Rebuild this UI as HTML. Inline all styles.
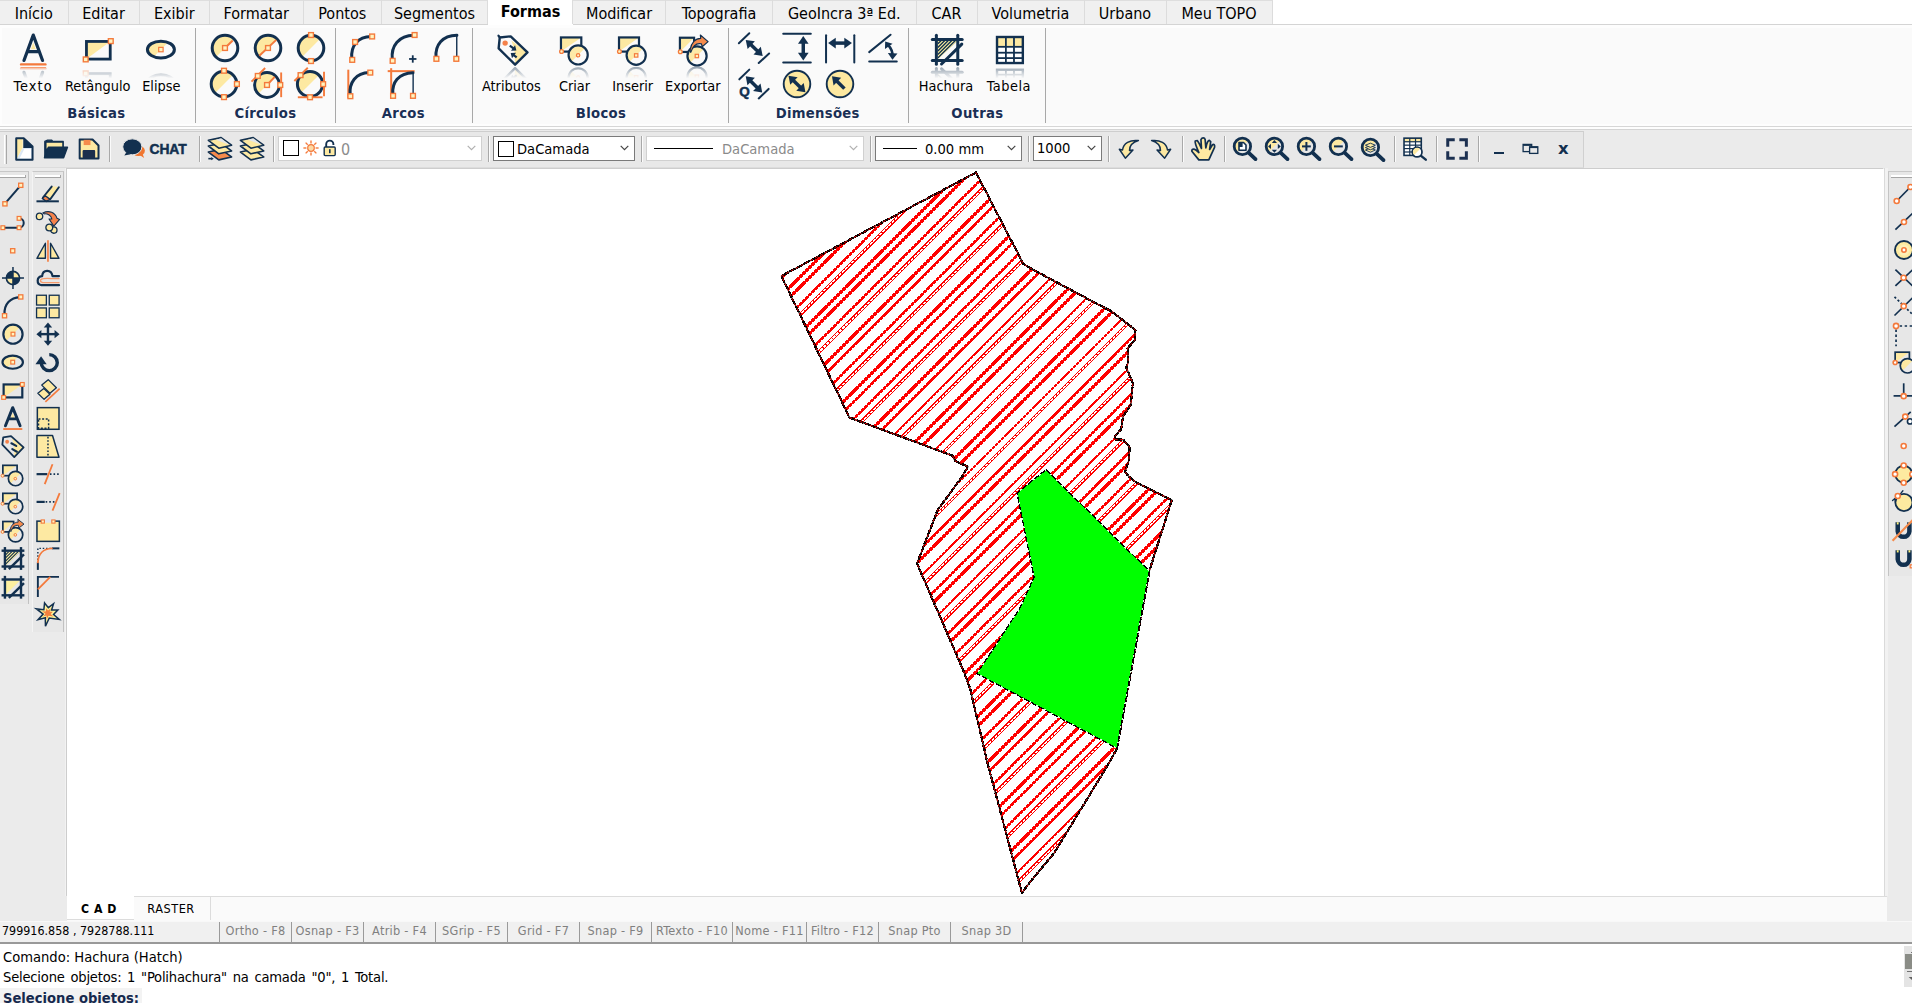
<!DOCTYPE html>
<html lang="pt-BR"><head><meta charset="utf-8"><title>CAD</title>
<style>
*{box-sizing:border-box;margin:0;padding:0}
html,body{width:1912px;height:1003px;overflow:hidden;background:#f0f0f0}
body{font-family:"DejaVu Sans Condensed","Liberation Sans",sans-serif;color:#000}
#app{position:relative;width:1912px;height:1003px;overflow:hidden;background:#ebebeb}
.abs{position:absolute}
svg{display:block;overflow:visible}
/* tabs */
#tabbar{position:absolute;left:0;top:0;width:1912px;height:25px;background:#fff;border-bottom:1px solid #d4d4d4}
.tab{box-shadow:-1px 0 0 #dcdcdc;position:absolute;top:0;height:24px;background:#f0f0f0;border-right:1px solid #dcdcdc;border-top:1px solid #dedede;font-size:16px;line-height:25px;text-align:center;white-space:nowrap}
.tab.act{box-shadow:none;top:0;height:25px;background:#fff;font-weight:bold;border:none;line-height:24px;font-size:16px}
/* ribbon */
#ribbon{position:absolute;left:0;top:25px;width:1912px;height:101px;background:#fdfdfd}
#ribpanel{position:absolute;left:2px;top:3px;width:1910px;height:96px;background:#fafafa}
.rsep{position:absolute;top:3px;width:1px;height:95px;background:#a8a8a8}
.rlab{position:absolute;font-size:14.4px;line-height:18px;white-space:nowrap;transform:translateX(-50%);top:52px}
.glab{position:absolute;font-weight:bold;letter-spacing:.3px;font-size:14.7px;text-shadow:0 0 2px #fff;line-height:18px;color:#1a2f55;white-space:nowrap;transform:translateX(-50%);top:79px}
.ico{position:absolute}
/* toolbar */
#tbband{position:absolute;left:0;top:126px;width:1912px;height:4px;background:#fdfdfd;border-top:1px solid #d6d6d6;border-bottom:1px solid #d4d4d4}
#toolbar{position:absolute;left:0;top:130px;width:1912px;height:39px;background:#ebebeb}
#tbbox{position:absolute;left:0;top:1px;width:1584px;height:37px;background:#e8e8e8;border-top:1px solid #cecece;border-right:1px solid #d0d0d0;border-bottom:1px solid #dcdcdc}
.tsep{position:absolute;top:6px;width:2px;height:26px;border-left:1px solid #a9a9a9;border-right:1px solid #fbfbfb}
.combo{position:absolute;top:5.5px;height:25px;background:#fff;border:1px solid #7a7a7a;font-size:14.6px;line-height:22px;white-space:nowrap}
.combo.dis{border-color:#d0d0d0;color:#8a8a8a}
.combo .chev{position:absolute;right:5px;top:8px}
/* canvas */
#canvas{box-shadow:-1px -1px 0 #cdcdcd;position:absolute;left:67px;top:169px;width:1817px;height:727px;background:#fff;overflow:hidden}
/* left */
.ltb{position:absolute;background:#e7e7e7;border-right:1px solid #c2c2c2;border-top:1px solid #c8c8c8;border-left:1px solid #f4f4f4}
.grip{position:absolute;height:3px;background:#fff;border-bottom:1px solid #a6a6a6;border-right:1px solid #a6a6a6}
/* bottom */
#btabs{position:absolute;left:67px;top:896px;width:1820px;height:25px;background:#fafafa;border-top:1px solid #dcdcdc}
.btab{position:absolute;top:0;height:24px;font-size:13px;line-height:23px;text-align:center}
#status{position:absolute;left:0;top:921px;width:1912px;height:23px;background:#f0f0f0;border-top:1px solid #f8f8f8;border-bottom:2px solid #999;font-size:12.6px;line-height:18px;color:#808080;font-family:"DejaVu Sans Condensed","Liberation Sans",sans-serif}
.cell{position:absolute;top:0;height:21px;letter-spacing:.28px;border-right:1px solid #9a9a9a;text-align:center;white-space:nowrap}
#cmd{position:absolute;left:0;top:944px;width:1912px;height:59px;background:#fff;font-size:14.6px;line-height:20px;white-space:nowrap}
#cmd div{position:absolute;left:3px}

</style></head><body>
<div id="app">
<div id="tabbar">
<div class="tab" style="left:0px;width:68.5px">Início</div>
<div class="tab" style="left:68.5px;width:71px">Editar</div>
<div class="tab" style="left:139.5px;width:70.5px">Exibir</div>
<div class="tab" style="left:210px;width:93.5px">Formatar</div>
<div class="tab" style="left:303.5px;width:78.5px">Pontos</div>
<div class="tab" style="left:382px;width:106px">Segmentos</div>
<div class="tab act" style="left:488px;width:85px">Formas</div>
<div class="tab" style="left:573px;width:93px">Modificar</div>
<div class="tab" style="left:666px;width:107px">Topografia</div>
<div class="tab" style="left:773px;width:143.5px">GeoIncra 3ª Ed.</div>
<div class="tab" style="left:916.5px;width:61px">CAR</div>
<div class="tab" style="left:977.5px;width:107px">Volumetria</div>
<div class="tab" style="left:1084.5px;width:82px">Urbano</div>
<div class="tab" style="left:1166.5px;width:106px">Meu TOPO</div>
</div>
<div id="ribbon"><div id="ribpanel"></div>
<div class="rsep" style="left:195px"></div>
<div class="rsep" style="left:335px"></div>
<div class="rsep" style="left:472px"></div>
<div class="rsep" style="left:728px"></div>
<div class="rsep" style="left:908px"></div>
<div class="rsep" style="left:1045px"></div>
<svg class="ico" style="left:16.5px;top:9px" width="32" height="46" viewBox="-16 -16 32 46"><path d="M0.27 -7.5 L-2.16 -0.63 L2.7 -0.63 Z" fill="#fde9a2"  stroke-linecap="round" stroke-linejoin="round" /><path d="M-9.03 10.47 L0.27 -14.9 L9.57 10.47 M-5.23 1.7 L5.77 1.7" fill="none" stroke="#12304f" stroke-width="3.2" stroke-linecap="round" stroke-linejoin="round" /><line x1="-11.89" y1="14.38" x2="12.43" y2="14.38" stroke="#f47a3c" stroke-width="2.4" stroke-linecap="round" /><line x1="-12.42" y1="17.55" x2="12.95" y2="17.55" stroke="#f8a983" stroke-width="1" stroke-linecap="butt" /><defs><linearGradient id="rg1" x1="0" y1="0" x2="0" y2="1"><stop offset="0" stop-color="#fff" stop-opacity=".45"/><stop offset="1" stop-color="#fff" stop-opacity="0"/></linearGradient><mask id="rm1" maskUnits="userSpaceOnUse" x="-20" y="16.4" width="40" height="12"><rect x="-20" y="16.4" width="40" height="12" fill="url(#rg1)"/></mask></defs><g mask="url(#rm1)"><g transform="translate(0,32.8) scale(1,-1)"><path d="M0.27 -7.5 L-2.16 -0.63 L2.7 -0.63 Z" fill="#fde9a2"  stroke-linecap="round" stroke-linejoin="round" /><path d="M-9.03 10.47 L0.27 -14.9 L9.57 10.47 M-5.23 1.7 L5.77 1.7" fill="none" stroke="#12304f" stroke-width="3.2" stroke-linecap="round" stroke-linejoin="round" /><line x1="-11.89" y1="14.38" x2="12.43" y2="14.38" stroke="#f47a3c" stroke-width="2.4" stroke-linecap="round" /><line x1="-12.42" y1="17.55" x2="12.95" y2="17.55" stroke="#f8a983" stroke-width="1" stroke-linecap="butt" /></g></g></svg>
<div class="rlab" style="left:32.5px"><span style="letter-spacing:1.1px;margin-right:-1.1px">Texto</span></div>
<svg class="ico" style="left:81.7px;top:9px" width="32" height="46" viewBox="-16 -16 32 46"><path d="M-11.55 -8.56L12.24 -8.56L-11.55 9.1Z" fill="#fde9a2"/><rect x="-11.55" y="-8.56" width="23.78" height="17.65" fill="none" stroke="#12304f" stroke-width="2.8"/><rect x="10.37" y="-11.28" width="4.8" height="4.8" fill="#fff4c0" stroke="#f47a3c" stroke-width="1.4"/><rect x="-14.69" y="7.01" width="4.8" height="4.8" fill="#fff4c0" stroke="#f47a3c" stroke-width="1.4"/><defs><linearGradient id="rg2" x1="0" y1="0" x2="0" y2="1"><stop offset="0" stop-color="#fff" stop-opacity=".45"/><stop offset="1" stop-color="#fff" stop-opacity="0"/></linearGradient><mask id="rm2" maskUnits="userSpaceOnUse" x="-20" y="16.4" width="40" height="12"><rect x="-20" y="16.4" width="40" height="12" fill="url(#rg2)"/></mask></defs><g mask="url(#rm2)"><g transform="translate(0,32.8) scale(1,-1)"><path d="M-11.55 -8.56L12.24 -8.56L-11.55 9.1Z" fill="#fde9a2"/><rect x="-11.55" y="-8.56" width="23.78" height="17.65" fill="none" stroke="#12304f" stroke-width="2.8"/><rect x="10.37" y="-11.28" width="4.8" height="4.8" fill="#fff4c0" stroke="#f47a3c" stroke-width="1.4"/><rect x="-14.69" y="7.01" width="4.8" height="4.8" fill="#fff4c0" stroke="#f47a3c" stroke-width="1.4"/></g></g></svg>
<div class="rlab" style="left:97.7px">Retângulo</div>
<svg class="ico" style="left:145.3px;top:9px" width="32" height="46" viewBox="-16 -16 32 46"><clipPath id="ecl"><ellipse cx="-0.09" cy="-0.42" rx="13.5" ry="8.4"/></clipPath><path d="M-20 20L20 -20L-20 -20Z" fill="#fde9a2" clip-path="url(#ecl)" transform="translate(-0.09,-0.42)"/><ellipse cx="-0.09" cy="-0.42" rx="13.5" ry="8.4" fill="none" stroke="#12304f" stroke-width="3"/><rect x="-2.29" y="-2.62" width="4.4" height="4.4" fill="#fff4c0" stroke="#f47a3c" stroke-width="1.2"/><defs><linearGradient id="rg3" x1="0" y1="0" x2="0" y2="1"><stop offset="0" stop-color="#fff" stop-opacity=".45"/><stop offset="1" stop-color="#fff" stop-opacity="0"/></linearGradient><mask id="rm3" maskUnits="userSpaceOnUse" x="-20" y="16.4" width="40" height="12"><rect x="-20" y="16.4" width="40" height="12" fill="url(#rg3)"/></mask></defs><g mask="url(#rm3)"><g transform="translate(0,32.8) scale(1,-1)"><clipPath id="ecl"><ellipse cx="-0.09" cy="-0.42" rx="13.5" ry="8.4"/></clipPath><path d="M-20 20L20 -20L-20 -20Z" fill="#fde9a2" clip-path="url(#ecl)" transform="translate(-0.09,-0.42)"/><ellipse cx="-0.09" cy="-0.42" rx="13.5" ry="8.4" fill="none" stroke="#12304f" stroke-width="3"/><rect x="-2.29" y="-2.62" width="4.4" height="4.4" fill="#fff4c0" stroke="#f47a3c" stroke-width="1.2"/></g></g></svg>
<div class="rlab" style="left:161.3px">Elipse</div>
<div class="glab" style="left:96.4px">Básicas</div>
<svg class="ico" style="left:208.71px;top:7.06px" width="32" height="32" viewBox="-16 -16 32 32"><path d="M-8.7 8.7A12.3 12.3 0 0 1 8.7 -8.7Z" fill="#fde9a2"/><circle cx="0" cy="0" r="12.8" fill="none" stroke="#12304f" stroke-width="3"/><line x1="0" y1="0" x2="7.74" y2="-7.52" stroke="#f47a3c" stroke-width="2" stroke-linecap="butt" /><rect x="-2.4" y="-2.4" width="4.8" height="4.8" fill="#fff4c0" stroke="#f47a3c" stroke-width="1.4"/></svg>
<svg class="ico" style="left:251.7px;top:6.91px" width="32" height="32" viewBox="-16 -16 32 32"><path d="M-8.7 8.7A12.3 12.3 0 0 1 8.7 -8.7Z" fill="#fde9a2"/><circle cx="0" cy="0" r="12.8" fill="none" stroke="#12304f" stroke-width="3"/><line x1="-8.7" y1="7.74" x2="8.26" y2="-8.11" stroke="#f47a3c" stroke-width="2" stroke-linecap="butt" /><rect x="-2.4" y="-2.4" width="4.8" height="4.8" fill="#fff4c0" stroke="#f47a3c" stroke-width="1.4"/></svg>
<svg class="ico" style="left:294.62px;top:6.76px" width="32" height="32" viewBox="-16 -16 32 32"><path d="M-8.7 8.7A12.3 12.3 0 0 1 8.7 -8.7Z" fill="#fde9a2"/><circle cx="0" cy="0" r="12.8" fill="none" stroke="#12304f" stroke-width="3"/><rect x="-2.4" y="-15.38" width="4.8" height="4.8" fill="#fff4c0" stroke="#f47a3c" stroke-width="1.4"/><rect x="-2.4" y="10.65" width="4.8" height="4.8" fill="#fff4c0" stroke="#f47a3c" stroke-width="1.4"/></svg>
<svg class="ico" style="left:207.75px;top:43.19px" width="32" height="32" viewBox="-16 -16 32 32"><path d="M-8.7 8.7A12.3 12.3 0 0 1 8.7 -8.7Z" fill="#fde9a2"/><circle cx="0" cy="0" r="12.8" fill="none" stroke="#12304f" stroke-width="3"/><rect x="-2.4" y="-15.67" width="4.8" height="4.8" fill="#fff4c0" stroke="#f47a3c" stroke-width="1.4"/><rect x="-2.4" y="10.73" width="4.8" height="4.8" fill="#fff4c0" stroke="#f47a3c" stroke-width="1.4"/><rect x="10.51" y="-2.4" width="4.8" height="4.8" fill="#fff4c0" stroke="#f47a3c" stroke-width="1.4"/></svg>
<svg class="ico" style="left:248.74px;top:42.15px" width="36" height="36" viewBox="-18 -18 36 36"><path d="M-8.41 8.41A11.9 11.9 0 0 1 8.41 -8.41Z" fill="#fde9a2"/><circle cx="0" cy="0" r="12.4" fill="none" stroke="#12304f" stroke-width="3"/><line x1="0" y1="0" x2="7.74" y2="-8.11" stroke="#f47a3c" stroke-width="2" stroke-linecap="butt" /><rect x="-2.4" y="-2.4" width="4.8" height="4.8" fill="#fff4c0" stroke="#f47a3c" stroke-width="1.4"/><line x1="-15.49" y1="-3.32" x2="-1.84" y2="-16.96" stroke="#f47a3c" stroke-width="1.9" stroke-linecap="butt" /><line x1="14.16" y1="-12.54" x2="14.16" y2="12.17" stroke="#f47a3c" stroke-width="1.9" stroke-linecap="butt" /><rect x="-11.62" y="-11.47" width="4.8" height="4.8" fill="#fff4c0" stroke="#f47a3c" stroke-width="1.4"/><rect x="10.87" y="-2.4" width="4.8" height="4.8" fill="#fff4c0" stroke="#f47a3c" stroke-width="1.4"/></svg>
<svg class="ico" style="left:291.88px;top:41.05px" width="36" height="36" viewBox="-18 -18 36 36"><path d="M-8.56 8.56A12.1 12.1 0 0 1 8.56 -8.56Z" fill="#fde9a2"/><circle cx="0" cy="0" r="12.6" fill="none" stroke="#12304f" stroke-width="3"/><line x1="-15.63" y1="-2.95" x2="-2.21" y2="-16.22" stroke="#f47a3c" stroke-width="1.9" stroke-linecap="butt" /><line x1="14.01" y1="-12.17" x2="14.01" y2="12.17" stroke="#f47a3c" stroke-width="1.9" stroke-linecap="butt" /><line x1="-12.17" y1="13.27" x2="12.54" y2="13.27" stroke="#f47a3c" stroke-width="1.9" stroke-linecap="butt" /><rect x="-11.84" y="-11.25" width="4.8" height="4.8" fill="#fff4c0" stroke="#f47a3c" stroke-width="1.4"/><rect x="10.73" y="-2.25" width="4.8" height="4.8" fill="#fff4c0" stroke="#f47a3c" stroke-width="1.4"/><rect x="-2.4" y="10.87" width="4.8" height="4.8" fill="#fff4c0" stroke="#f47a3c" stroke-width="1.4"/></svg>
<div class="glab" style="left:265.4px">Círculos</div>
<svg class="ico" style="left:343.5px;top:5px" width="36" height="36" viewBox="-18 -18 36 36"><path d="M-10.23 10.97 C-11.49 -2.3 -4.11 -11.3 9.16 -11.52" fill="none" stroke="#12304f" stroke-width="3" stroke-linecap="round" stroke-linejoin="round" /><rect x="-12.19" y="9.46" width="4.8" height="4.8" fill="#fff4c0" stroke="#f47a3c" stroke-width="1.4"/><rect x="-9.32" y="-8.39" width="4.8" height="4.8" fill="#fff4c0" stroke="#f47a3c" stroke-width="1.4"/><rect x="7.72" y="-13.92" width="4.8" height="4.8" fill="#fff4c0" stroke="#f47a3c" stroke-width="1.4"/></svg>
<svg class="ico" style="left:385.3px;top:5px" width="36" height="36" viewBox="-18 -18 36 36"><path d="M-10.66 11.71 C-12.36 -2.3 -3.88 -12.63 10.87 -12.77" fill="none" stroke="#12304f" stroke-width="3" stroke-linecap="round" stroke-linejoin="round" /><line x1="6.08" y1="10.97" x2="13.45" y2="10.97" stroke="#12304f" stroke-width="1.8" stroke-linecap="butt" /><line x1="9.76" y1="7.29" x2="9.76" y2="14.66" stroke="#12304f" stroke-width="1.8" stroke-linecap="butt" /><rect x="-12.77" y="10.42" width="4.8" height="4.8" fill="#fff4c0" stroke="#f47a3c" stroke-width="1.4"/><rect x="9.21" y="-15.39" width="4.8" height="4.8" fill="#fff4c0" stroke="#f47a3c" stroke-width="1.4"/></svg>
<svg class="ico" style="left:428.9px;top:5px" width="36" height="36" viewBox="-18 -18 36 36"><path d="M-10.97 9.5 C-12.08 -3.04 -4.71 -12.63 9.9 -12.77" fill="none" stroke="#12304f" stroke-width="3" stroke-linecap="round" stroke-linejoin="round" /><line x1="9.75" y1="-12.63" x2="9.75" y2="9.5" stroke="#12304f" stroke-width="1.4" stroke-linecap="butt" /><rect x="-13.01" y="8.43" width="4.8" height="4.8" fill="#fff4c0" stroke="#f47a3c" stroke-width="1.4"/><rect x="6.91" y="8.43" width="4.8" height="4.8" fill="#fff4c0" stroke="#f47a3c" stroke-width="1.4"/></svg>
<svg class="ico" style="left:343.5px;top:41px" width="36" height="36" viewBox="-18 -18 36 36"><line x1="-13.7" y1="-14.33" x2="-13.7" y2="14.06" stroke="#f47a3c" stroke-width="2" stroke-linecap="butt" /><path d="M-11.86 10.74 C-12.96 -1.43 -6.33 -11.01 7.32 -11.38" fill="none" stroke="#12304f" stroke-width="3" stroke-linecap="round" stroke-linejoin="round" /><rect x="-14.04" y="9.82" width="4.8" height="4.8" fill="#fff4c0" stroke="#f47a3c" stroke-width="1.4"/><rect x="5.88" y="-13.78" width="4.8" height="4.8" fill="#fff4c0" stroke="#f47a3c" stroke-width="1.4"/></svg>
<svg class="ico" style="left:385.3px;top:41px" width="36" height="36" viewBox="-18 -18 36 36"><line x1="-11.84" y1="-15.81" x2="-11.84" y2="14.43" stroke="#f47a3c" stroke-width="2" stroke-linecap="butt" /><line x1="-15.31" y1="-12.86" x2="11.61" y2="-12.86" stroke="#f47a3c" stroke-width="2" stroke-linecap="butt" /><path d="M-10.15 10.37 C-11.25 -1.43 -4.62 -10.87 9.99 -11.24" fill="none" stroke="#12304f" stroke-width="3" stroke-linecap="round" stroke-linejoin="round" /><line x1="10.13" y1="-11.16" x2="10.13" y2="10.37" stroke="#12304f" stroke-width="1.4" stroke-linecap="butt" /><rect x="-12.33" y="9.45" width="4.8" height="4.8" fill="#fff4c0" stroke="#f47a3c" stroke-width="1.4"/><rect x="7.59" y="9.45" width="4.8" height="4.8" fill="#fff4c0" stroke="#f47a3c" stroke-width="1.4"/></svg>
<div class="glab" style="left:403.3px">Arcos</div>
<svg class="ico" style="left:497px;top:9px" width="32" height="46" viewBox="-16 -16 32 46"><path d="M-1.6 -9.46 L13.88 2.34 L2.09 14.14 L1.35 0.12 Z" fill="#fde9a2"/><path d="M-13.25 -12.56 L-2.34 -13.67 L14.47 2.34 L2.09 14.65 L-14.36 -1.72 Z" fill="none" stroke="#12304f" stroke-width="2.4" stroke-linecap="round" stroke-linejoin="round" /><line x1="-13.25" y1="-12.56" x2="-14.51" y2="-14.26" stroke="#12304f" stroke-width="2.2" stroke-linecap="round" /><circle cx="-7.87" cy="-6.88" r="2.7" fill="#f4814a" /><line x1="-3.22" y1="-4.45" x2="1.81" y2="-0.7" stroke="#12304f" stroke-width="2.2" stroke-linecap="butt" /><path d="M3.41 0.49L-1.99 0.71L2.07 -4.74Z" fill="#12304f"/><line x1="3.71" y1="7.35" x2="-0.73" y2="4.11" stroke="#12304f" stroke-width="2.2" stroke-linecap="butt" /><path d="M-2.34 2.93L3.06 2.66L-0.96 8.15Z" fill="#12304f"/><defs><linearGradient id="rg4" x1="0" y1="0" x2="0" y2="1"><stop offset="0" stop-color="#fff" stop-opacity=".45"/><stop offset="1" stop-color="#fff" stop-opacity="0"/></linearGradient><mask id="rm4" maskUnits="userSpaceOnUse" x="-20" y="16.4" width="40" height="12"><rect x="-20" y="16.4" width="40" height="12" fill="url(#rg4)"/></mask></defs><g mask="url(#rm4)"><g transform="translate(0,32.8) scale(1,-1)"><path d="M-1.6 -9.46 L13.88 2.34 L2.09 14.14 L1.35 0.12 Z" fill="#fde9a2"/><path d="M-13.25 -12.56 L-2.34 -13.67 L14.47 2.34 L2.09 14.65 L-14.36 -1.72 Z" fill="none" stroke="#12304f" stroke-width="2.4" stroke-linecap="round" stroke-linejoin="round" /><line x1="-13.25" y1="-12.56" x2="-14.51" y2="-14.26" stroke="#12304f" stroke-width="2.2" stroke-linecap="round" /><circle cx="-7.87" cy="-6.88" r="2.7" fill="#f4814a" /><line x1="-3.22" y1="-4.45" x2="1.81" y2="-0.7" stroke="#12304f" stroke-width="2.2" stroke-linecap="butt" /><path d="M3.41 0.49L-1.99 0.71L2.07 -4.74Z" fill="#12304f"/><line x1="3.71" y1="7.35" x2="-0.73" y2="4.11" stroke="#12304f" stroke-width="2.2" stroke-linecap="butt" /><path d="M-2.34 2.93L3.06 2.66L-0.96 8.15Z" fill="#12304f"/></g></g></svg>
<div class="rlab" style="left:511.3px">Atributos</div>
<svg class="ico" style="left:558px;top:9px" width="32" height="46" viewBox="-16 -16 32 46"><path d="M-13.04 -12.56L7.31 -12.56L-13.04 1.6Z" fill="#fde9a2"/><rect x="-13.04" y="-12.56" width="20.35" height="14.16" fill="none" stroke="#12304f" stroke-width="2.2"/><circle cx="4.14" cy="4.92" r="9.6" fill="#fafafa" /><path d="M-2.37 11.42A9.2 9.2 0 0 1 10.64 -1.59Z" fill="#fdeaa8"/><circle cx="4.14" cy="4.92" r="9.6" fill="none" stroke="#12304f" stroke-width="2.2"/><circle cx="-12.45" cy="1.45" r="1.9" fill="#fff4c0" stroke="#f47a3c" stroke-width="1.3"/><circle cx="4.14" cy="5.29" r="1.7" fill="#fff4c0" stroke="#f47a3c" stroke-width="1.2"/><defs><linearGradient id="rg5" x1="0" y1="0" x2="0" y2="1"><stop offset="0" stop-color="#fff" stop-opacity=".45"/><stop offset="1" stop-color="#fff" stop-opacity="0"/></linearGradient><mask id="rm5" maskUnits="userSpaceOnUse" x="-20" y="16.4" width="40" height="12"><rect x="-20" y="16.4" width="40" height="12" fill="url(#rg5)"/></mask></defs><g mask="url(#rm5)"><g transform="translate(0,32.8) scale(1,-1)"><path d="M-13.04 -12.56L7.31 -12.56L-13.04 1.6Z" fill="#fde9a2"/><rect x="-13.04" y="-12.56" width="20.35" height="14.16" fill="none" stroke="#12304f" stroke-width="2.2"/><circle cx="4.14" cy="4.92" r="9.6" fill="#fafafa" /><path d="M-2.37 11.42A9.2 9.2 0 0 1 10.64 -1.59Z" fill="#fdeaa8"/><circle cx="4.14" cy="4.92" r="9.6" fill="none" stroke="#12304f" stroke-width="2.2"/><circle cx="-12.45" cy="1.45" r="1.9" fill="#fff4c0" stroke="#f47a3c" stroke-width="1.3"/><circle cx="4.14" cy="5.29" r="1.7" fill="#fff4c0" stroke="#f47a3c" stroke-width="1.2"/></g></g></svg>
<div class="rlab" style="left:574.5px">Criar</div>
<svg class="ico" style="left:616px;top:9px" width="32" height="46" viewBox="-16 -16 32 46"><path d="M-12.99 -12.56L6.99 -12.56L-12.99 1.6Z" fill="#fde9a2"/><rect x="-12.99" y="-12.56" width="19.99" height="14.16" fill="none" stroke="#12304f" stroke-width="2.2"/><circle cx="4.19" cy="5.29" r="9.6" fill="#fafafa" /><path d="M-2.31 11.79A9.2 9.2 0 0 1 10.7 -1.22Z" fill="#fdeaa8"/><circle cx="4.19" cy="5.29" r="9.6" fill="none" stroke="#12304f" stroke-width="2.2"/><circle cx="-12.55" cy="1.45" r="1.9" fill="#fff4c0" stroke="#f47a3c" stroke-width="1.3"/><rect x="2.49" y="3.73" width="3.4" height="3.4" fill="#fff4c0" stroke="#f47a3c" stroke-width="1.2"/><defs><linearGradient id="rg6" x1="0" y1="0" x2="0" y2="1"><stop offset="0" stop-color="#fff" stop-opacity=".45"/><stop offset="1" stop-color="#fff" stop-opacity="0"/></linearGradient><mask id="rm6" maskUnits="userSpaceOnUse" x="-20" y="16.4" width="40" height="12"><rect x="-20" y="16.4" width="40" height="12" fill="url(#rg6)"/></mask></defs><g mask="url(#rm6)"><g transform="translate(0,32.8) scale(1,-1)"><path d="M-12.99 -12.56L6.99 -12.56L-12.99 1.6Z" fill="#fde9a2"/><rect x="-12.99" y="-12.56" width="19.99" height="14.16" fill="none" stroke="#12304f" stroke-width="2.2"/><circle cx="4.19" cy="5.29" r="9.6" fill="#fafafa" /><path d="M-2.31 11.79A9.2 9.2 0 0 1 10.7 -1.22Z" fill="#fdeaa8"/><circle cx="4.19" cy="5.29" r="9.6" fill="none" stroke="#12304f" stroke-width="2.2"/><circle cx="-12.55" cy="1.45" r="1.9" fill="#fff4c0" stroke="#f47a3c" stroke-width="1.3"/><rect x="2.49" y="3.73" width="3.4" height="3.4" fill="#fff4c0" stroke="#f47a3c" stroke-width="1.2"/></g></g></svg>
<div class="rlab" style="left:632.7px">Inserir</div>
<svg class="ico" style="left:676px;top:9px" width="32" height="46" viewBox="-16 -16 32 46"><path d="M-12.08 -12.27L2.08 -12.27L-12.08 1.97Z" fill="#fde9a2"/><rect x="-12.08" y="-12.27" width="14.16" height="14.23" fill="none" stroke="#12304f" stroke-width="2.2"/><circle cx="5.03" cy="5.88" r="9.6" fill="#fafafa" /><path d="M-1.47 12.38A9.2 9.2 0 0 1 11.54 -0.63Z" fill="#fdeaa8"/><circle cx="5.03" cy="5.88" r="9.6" fill="none" stroke="#12304f" stroke-width="2.2"/><path d="M-1.97 0.12 C-0.87 -7.25 3.56 -11.68 8.72 -11.68 L8.35 -14.99 L16.09 -8.36 L10.19 -3.19 L9.46 -6.14 C5.03 -7.25 1.35 -5.04 -1.24 2.34 Z" fill="#f58b4c" stroke="#12304f" stroke-width="1.2" stroke-linecap="round" stroke-linejoin="round" /><circle cx="-11.71" cy="1.75" r="1.9" fill="#fff4c0" stroke="#f47a3c" stroke-width="1.3"/><rect x="3.18" y="4.32" width="3.4" height="3.4" fill="#fff4c0" stroke="#f47a3c" stroke-width="1.2"/><defs><linearGradient id="rg7" x1="0" y1="0" x2="0" y2="1"><stop offset="0" stop-color="#fff" stop-opacity=".45"/><stop offset="1" stop-color="#fff" stop-opacity="0"/></linearGradient><mask id="rm7" maskUnits="userSpaceOnUse" x="-20" y="16.4" width="40" height="12"><rect x="-20" y="16.4" width="40" height="12" fill="url(#rg7)"/></mask></defs><g mask="url(#rm7)"><g transform="translate(0,32.8) scale(1,-1)"><path d="M-12.08 -12.27L2.08 -12.27L-12.08 1.97Z" fill="#fde9a2"/><rect x="-12.08" y="-12.27" width="14.16" height="14.23" fill="none" stroke="#12304f" stroke-width="2.2"/><circle cx="5.03" cy="5.88" r="9.6" fill="#fafafa" /><path d="M-1.47 12.38A9.2 9.2 0 0 1 11.54 -0.63Z" fill="#fdeaa8"/><circle cx="5.03" cy="5.88" r="9.6" fill="none" stroke="#12304f" stroke-width="2.2"/><path d="M-1.97 0.12 C-0.87 -7.25 3.56 -11.68 8.72 -11.68 L8.35 -14.99 L16.09 -8.36 L10.19 -3.19 L9.46 -6.14 C5.03 -7.25 1.35 -5.04 -1.24 2.34 Z" fill="#f58b4c" stroke="#12304f" stroke-width="1.2" stroke-linecap="round" stroke-linejoin="round" /><circle cx="-11.71" cy="1.75" r="1.9" fill="#fff4c0" stroke="#f47a3c" stroke-width="1.3"/><rect x="3.18" y="4.32" width="3.4" height="3.4" fill="#fff4c0" stroke="#f47a3c" stroke-width="1.2"/></g></g></svg>
<div class="rlab" style="left:692.8px">Exportar</div>
<div class="glab" style="left:601px">Blocos</div>
<svg class="ico" style="left:735.8px;top:4.6px" width="36" height="36" viewBox="-18 -18 36 36"><line x1="-15.14" y1="-4.72" x2="-4.69" y2="-14.7" stroke="#12304f" stroke-width="2" stroke-linecap="round" /><line x1="4.73" y1="15.05" x2="15.09" y2="5.54" stroke="#12304f" stroke-width="2" stroke-linecap="round" /><line x1="-4.63" y1="-4.68" x2="5.05" y2="4.46" stroke="#12304f" stroke-width="3.5" stroke-linecap="butt" /><path d="M8.69 7.9L-0.48 6.53L6.8 -1.18Z" fill="#12304f"/><path d="M-8.26 -8.11L0.9 -6.75L-6.38 0.96Z" fill="#12304f"/></svg>
<svg class="ico" style="left:778.7px;top:5.2px" width="36" height="36" viewBox="-18 -18 36 36"><line x1="-13.78" y1="-14.36" x2="13.81" y2="-14.36" stroke="#12304f" stroke-width="2" stroke-linecap="round" /><line x1="-13.78" y1="14.45" x2="13.81" y2="14.45" stroke="#12304f" stroke-width="2" stroke-linecap="round" /><line x1="6.28" y1="-6.91" x2="6.28" y2="7.47" stroke="#12304f" stroke-width="3.5" stroke-linecap="butt" /><path d="M6.28 12.47L0.98 4.87L11.58 4.87Z" fill="#12304f"/><path d="M6.28 -11.91L11.58 -4.31L0.98 -4.31Z" fill="#12304f"/></svg>
<svg class="ico" style="left:822px;top:5.5px" width="36" height="36" viewBox="-18 -18 36 36"><line x1="-13.95" y1="-13.72" x2="-13.95" y2="13.59" stroke="#12304f" stroke-width="2" stroke-linecap="round" /><line x1="14.29" y1="-13.72" x2="14.29" y2="13.59" stroke="#12304f" stroke-width="2" stroke-linecap="round" /><line x1="-6.88" y1="-5.9" x2="6.94" y2="-5.9" stroke="#12304f" stroke-width="3.5" stroke-linecap="butt" /><path d="M11.94 -5.9L4.34 -0.6L4.34 -11.2Z" fill="#12304f"/><path d="M-11.88 -5.9L-4.28 -11.2L-4.28 -0.6Z" fill="#12304f"/></svg>
<svg class="ico" style="left:864.7px;top:4.6px" width="36" height="36" viewBox="-18 -18 36 36"><line x1="-13.81" y1="4.13" x2="7.56" y2="-13.29" stroke="#12304f" stroke-width="2" stroke-linecap="round" /><line x1="-13.81" y1="13.55" x2="13.78" y2="13.55" stroke="#12304f" stroke-width="2" stroke-linecap="round" /><path d="M5.02 -3.12 Q9.73 2.06 9.45 7.71" fill="none" stroke="#12304f" stroke-width="2.6" stroke-linecap="round" stroke-linejoin="round" /><path d="M2.2 -6.61L9.52 -4.17L1.98 1.11Z" fill="#12304f"/><path d="M9.45 11.66L4.87 5.1L14.47 5.43Z" fill="#12304f"/></svg>
<svg class="ico" style="left:735.8px;top:41px" width="36" height="36" viewBox="-18 -18 36 36"><line x1="-14.67" y1="-4.68" x2="-4.69" y2="-14.38" stroke="#12304f" stroke-width="2" stroke-linecap="round" /><line x1="4.73" y1="14.43" x2="14.62" y2="4.92" stroke="#12304f" stroke-width="2" stroke-linecap="round" /><line x1="-4.71" y1="-4.27" x2="4.66" y2="4.99" stroke="#12304f" stroke-width="3.5" stroke-linecap="butt" /><path d="M8.22 8.5L-0.92 6.93L6.54 -0.61Z" fill="#12304f"/><path d="M-8.26 -7.79L0.87 -6.22L-6.58 1.32Z" fill="#12304f"/><text x="-14.85" y="12.17" font-family="Liberation Sans,sans-serif" font-weight="bold" font-size="13.5" fill="#12304f" stroke="#12304f" stroke-width=".5">Q</text></svg>
<svg class="ico" style="left:780.9px;top:43.3px" width="32" height="32" viewBox="-16 -16 32 32"><circle cx="0" cy="0" r="13.3" fill="#fde9a0" stroke="#12304f" stroke-width="1.9"/><line x1="-4.93" y1="-4.79" x2="4.84" y2="4.72" stroke="#12304f" stroke-width="3.5" stroke-linecap="butt" /><path d="M8.43 8.2L-0.71 6.7L6.67 -0.9Z" fill="#12304f"/><path d="M-8.52 -8.28L0.62 -6.78L-6.76 0.82Z" fill="#12304f"/></svg>
<svg class="ico" style="left:823.7px;top:43.3px" width="32" height="32" viewBox="-16 -16 32 32"><circle cx="0" cy="0" r="13.3" fill="#fde9a0" stroke="#12304f" stroke-width="1.9"/><line x1="4.42" y1="4.62" x2="-4.01" y2="-3.81" stroke="#12304f" stroke-width="3.5" stroke-linecap="butt" /><path d="M-8.01 -7.81L1.19 -6.25L-6.45 1.39Z" fill="#12304f"/></svg>
<div class="glab" style="left:817.7px">Dimensões</div>
<svg class="ico" style="left:930.8px;top:9px" width="32" height="46" viewBox="-16 -16 32 46"><clipPath id="hcl"><path d="M-9.15 -9.09 L10.4 -9.09 L-9.15 9.34 Z"/></clipPath><path d="M-9.15 -9.09 L10.4 -9.09 L-9.15 9.34 Z" fill="#fdf0a0"/><path d="M-9.15 -6.14 L-2.14 -13.15M-9.15 -2.6 L1.4 -13.15M-9.15 0.94 L4.94 -13.15M-9.15 4.47 L8.48 -13.15M-9.15 8.01 L12.02 -13.15M-9.15 11.55 L15.56 -13.15M-9.15 15.09 L19.1 -13.15M-9.15 18.63 L22.64 -13.15M-9.15 22.17 L26.18 -13.15M-9.15 25.71 L29.72 -13.15M-9.15 29.25 L33.26 -13.15" stroke="#12304f" stroke-width="1.4" clip-path="url(#hcl)"/><line x1="-14.68" y1="-10.57" x2="15.19" y2="-10.57" stroke="#12304f" stroke-width="3" stroke-linecap="round" /><line x1="-14.68" y1="10.45" x2="15.19" y2="10.45" stroke="#12304f" stroke-width="3" stroke-linecap="round" /><line x1="-10.62" y1="-14.63" x2="-10.62" y2="14.28" stroke="#12304f" stroke-width="3" stroke-linecap="round" /><line x1="10.77" y1="-14.63" x2="10.77" y2="14.28" stroke="#12304f" stroke-width="3" stroke-linecap="round" /><line x1="-5.46" y1="13.99" x2="14.82" y2="-5.92" stroke="#12304f" stroke-width="3" stroke-linecap="round" /><defs><linearGradient id="rg8" x1="0" y1="0" x2="0" y2="1"><stop offset="0" stop-color="#fff" stop-opacity=".45"/><stop offset="1" stop-color="#fff" stop-opacity="0"/></linearGradient><mask id="rm8" maskUnits="userSpaceOnUse" x="-20" y="16.4" width="40" height="12"><rect x="-20" y="16.4" width="40" height="12" fill="url(#rg8)"/></mask></defs><g mask="url(#rm8)"><g transform="translate(0,32.8) scale(1,-1)"><clipPath id="hcl"><path d="M-9.15 -9.09 L10.4 -9.09 L-9.15 9.34 Z"/></clipPath><path d="M-9.15 -9.09 L10.4 -9.09 L-9.15 9.34 Z" fill="#fdf0a0"/><path d="M-9.15 -6.14 L-2.14 -13.15M-9.15 -2.6 L1.4 -13.15M-9.15 0.94 L4.94 -13.15M-9.15 4.47 L8.48 -13.15M-9.15 8.01 L12.02 -13.15M-9.15 11.55 L15.56 -13.15M-9.15 15.09 L19.1 -13.15M-9.15 18.63 L22.64 -13.15M-9.15 22.17 L26.18 -13.15M-9.15 25.71 L29.72 -13.15M-9.15 29.25 L33.26 -13.15" stroke="#12304f" stroke-width="1.4" clip-path="url(#hcl)"/><line x1="-14.68" y1="-10.57" x2="15.19" y2="-10.57" stroke="#12304f" stroke-width="3" stroke-linecap="round" /><line x1="-14.68" y1="10.45" x2="15.19" y2="10.45" stroke="#12304f" stroke-width="3" stroke-linecap="round" /><line x1="-10.62" y1="-14.63" x2="-10.62" y2="14.28" stroke="#12304f" stroke-width="3" stroke-linecap="round" /><line x1="10.77" y1="-14.63" x2="10.77" y2="14.28" stroke="#12304f" stroke-width="3" stroke-linecap="round" /><line x1="-5.46" y1="13.99" x2="14.82" y2="-5.92" stroke="#12304f" stroke-width="3" stroke-linecap="round" /></g></g></svg>
<div class="rlab" style="left:946px">Hachura</div>
<svg class="ico" style="left:994px;top:9px" width="32" height="46" viewBox="-16 -16 32 46"><rect x="-12.98" y="-13" width="25.81" height="26.03" fill="#fff"/><rect x="-12.98" y="-13" width="25.81" height="9.44" fill="#fde9a2"/><rect x="-12.98" y="-13" width="25.81" height="26.03" fill="none" stroke="#12304f" stroke-width="2.4"/><line x1="-4.13" y1="-13" x2="-4.13" y2="13.03" stroke="#12304f" stroke-width="1.8" stroke-linecap="butt" /><line x1="3.98" y1="-13" x2="3.98" y2="13.03" stroke="#12304f" stroke-width="1.8" stroke-linecap="butt" /><line x1="-12.98" y1="-3.19" x2="12.83" y2="-3.19" stroke="#12304f" stroke-width="1.8" stroke-linecap="butt" /><line x1="-12.98" y1="2.71" x2="12.83" y2="2.71" stroke="#12304f" stroke-width="1.8" stroke-linecap="butt" /><line x1="-12.98" y1="8.09" x2="12.83" y2="8.09" stroke="#12304f" stroke-width="1.8" stroke-linecap="butt" /><defs><linearGradient id="rg9" x1="0" y1="0" x2="0" y2="1"><stop offset="0" stop-color="#fff" stop-opacity=".45"/><stop offset="1" stop-color="#fff" stop-opacity="0"/></linearGradient><mask id="rm9" maskUnits="userSpaceOnUse" x="-20" y="16.4" width="40" height="12"><rect x="-20" y="16.4" width="40" height="12" fill="url(#rg9)"/></mask></defs><g mask="url(#rm9)"><g transform="translate(0,32.8) scale(1,-1)"><rect x="-12.98" y="-13" width="25.81" height="26.03" fill="#fff"/><rect x="-12.98" y="-13" width="25.81" height="9.44" fill="#fde9a2"/><rect x="-12.98" y="-13" width="25.81" height="26.03" fill="none" stroke="#12304f" stroke-width="2.4"/><line x1="-4.13" y1="-13" x2="-4.13" y2="13.03" stroke="#12304f" stroke-width="1.8" stroke-linecap="butt" /><line x1="3.98" y1="-13" x2="3.98" y2="13.03" stroke="#12304f" stroke-width="1.8" stroke-linecap="butt" /><line x1="-12.98" y1="-3.19" x2="12.83" y2="-3.19" stroke="#12304f" stroke-width="1.8" stroke-linecap="butt" /><line x1="-12.98" y1="2.71" x2="12.83" y2="2.71" stroke="#12304f" stroke-width="1.8" stroke-linecap="butt" /><line x1="-12.98" y1="8.09" x2="12.83" y2="8.09" stroke="#12304f" stroke-width="1.8" stroke-linecap="butt" /></g></g></svg>
<div class="rlab" style="left:1008.6px"><span style="letter-spacing:.5px;margin-right:-.5px">Tabela</span></div>
<div class="glab" style="left:977.4px">Outras</div>
</div>
<div id="tbband"></div><div id="toolbar"><div id="tbbox"></div>
<div class="abs" style="left:4px;top:5px;width:3px;height:29px;border-left:1px solid #fff;border-right:1px solid #a8a8a8"></div>
<div class="tsep" style="left:109px"></div>
<div class="tsep" style="left:199px"></div>
<div class="tsep" style="left:273px"></div>
<div class="tsep" style="left:488px"></div>
<div class="tsep" style="left:641px"></div>
<div class="tsep" style="left:870px"></div>
<div class="tsep" style="left:1028px"></div>
<div class="tsep" style="left:1108px"></div>
<div class="tsep" style="left:1182px"></div>
<div class="tsep" style="left:1224px"></div>
<div class="tsep" style="left:1394px"></div>
<div class="tsep" style="left:1436px"></div>
<div class="tsep" style="left:1478px"></div>
<svg class="ico" style="left:10.3px;top:4.7px" width="28" height="28" viewBox="-14 -14 28 28"><path d="M-7.56 -10.44 L0.28 -10.44 L8.34 -2.28 L8.34 10.48 L-7.56 10.48 Z" fill="#fff"/><path d="M-7.56 -10.44 L-1.29 -10.44 L-1.29 -1.03 L-7.56 10.48 Z" fill="#fde9a2"/><path d="M-1.29 -1.03 L8.34 -1.03 L8.34 10.48 L-7.56 10.48 Z" fill="#dbe8f5"/><path d="M0.28 0.02 L7.08 0.02 L7.08 9.43 L-4.43 9.43 Z" fill="#fff"/><path d="M-0.76 -10.96 L8.96 -2.07 L8.96 -1.03 L-0.76 -1.03 Z" fill="#12304f"/><path d="M-7.77 -10.65 L-0.03 -10.65 L8.55 -2.49 L8.55 10.69 L-7.77 10.69 Z" fill="none" stroke="#12304f" stroke-width="2" stroke-linecap="round" stroke-linejoin="round" /></svg>
<svg class="ico" style="left:42px;top:5.2px" width="28" height="28" viewBox="-14 -14 28 28"><path d="M-11.23 8.41 L-11.23 -7.59 L-8.41 -8.85 L-4.22 -8.85 L-3.18 -7.59 L7.28 -7.59 L7.28 8.41 Z" fill="#12304f" stroke="#12304f" stroke-width="1.2" stroke-linecap="round" stroke-linejoin="round" /><path d="M-9.45 -6.23 L6.24 -6.23 L6.24 -0.48 L-9.45 -0.48 Z" fill="#fde9a2"/><path d="M-11.54 8.73 L-7.67 -1.73 L11.47 -1.73 L7.6 8.73 Z" fill="#12304f" stroke="#12304f" stroke-width="1.4" stroke-linecap="round" stroke-linejoin="round" /></svg>
<svg class="ico" style="left:74.5px;top:5.3px" width="28" height="28" viewBox="-14 -14 28 28"><path d="M-9.32 -9.47 L3.55 -9.47 L9.51 -3.51 L9.51 9.57 L-9.32 9.57 Z" fill="#fde9a2" stroke="#12304f" stroke-width="2" stroke-linecap="round" stroke-linejoin="round" /><rect x="-5.34" y="-9.16" width="6.8" height="5.23" fill="#f58b4c"/><rect x="-6.39" y="0.99" width="12.55" height="8.37" rx="1" fill="#1b2f4c"/></svg>
<svg class="ico" style="left:119px;top:3.3px" width="30" height="30" viewBox="-15 -15 30 30"><ellipse cx="4.28" cy="2.72" rx="6.6" ry="5.4" fill="#f0762f"/><path d="M5.64 6.91 L10.14 10.04 L8.47 5.65 Z" fill="#f0762f"/><ellipse cx="-1.68" cy="-1.15" rx="9.6" ry="8" fill="#12304f" stroke="#e6e6e6" stroke-width="1"/><path d="M-7.43 4.08 L-9.73 7.53 L-3.25 6.17 Z" fill="#12304f"/></svg>
<svg class="ico" style="left:148px;top:9px" width="42" height="20" viewBox="0 0 42 20"><text x="1.4" y="14.6" font-family="Liberation Sans,sans-serif" font-weight="bold" font-size="15" fill="#12304f" stroke="#12304f" stroke-width=".5" textLength="37.4" lengthAdjust="spacingAndGlyphs">CHAT</text></svg>
<svg class="ico" style="left:206px;top:4.8px" width="28" height="28" viewBox="-14 -14 28 28"><path d="M-11.66 3.06 L1.1 0.34 L11.56 7.97 L-1.2 10.9 Z" fill="#f58b4c" stroke="#12304f" stroke-width="1.6" stroke-linecap="round" stroke-linejoin="round" /><path d="M-11.66 -3.01 L1.1 -5.73 L11.56 1.91 L-1.2 4.84 Z" fill="#fde9a2" stroke="#12304f" stroke-width="1.6" stroke-linecap="round" stroke-linejoin="round" /><path d="M-11.66 -8.66 L1.1 -11.38 L11.56 -3.74 L-1.2 -0.81 Z" fill="#fde9a2" stroke="#12304f" stroke-width="1.6" stroke-linecap="round" stroke-linejoin="round" /><path d="M1.1 -10.75 L10.52 -3.85 L-4.13 -9.28 Z" fill="#e3e6ea"/><line x1="-11.66" y1="9.65" x2="-8.31" y2="9.65" stroke="#12304f" stroke-width="1.6" stroke-linecap="butt" /><path d="M-8.83 8.08 L-6.22 9.65 L-8.83 11.22 Z" fill="#12304f"/></svg>
<svg class="ico" style="left:238px;top:4.8px" width="28" height="28" viewBox="-14 -14 28 28"><path d="M-11.54 3.06 L1.22 0.34 L11.68 7.97 L-1.08 10.9 Z" fill="#fde9a2" stroke="#12304f" stroke-width="1.6" stroke-linecap="round" stroke-linejoin="round" /><path d="M-11.54 -3.01 L1.22 -5.73 L11.68 1.91 L-1.08 4.84 Z" fill="#fde9a2" stroke="#12304f" stroke-width="1.6" stroke-linecap="round" stroke-linejoin="round" /><path d="M-11.54 -8.66 L1.22 -11.38 L11.68 -3.74 L-1.08 -0.81 Z" fill="#fde9a2" stroke="#12304f" stroke-width="1.6" stroke-linecap="round" stroke-linejoin="round" /><path d="M1.22 -10.75 L10.63 -3.85 L-4.01 -9.28 Z" fill="#e3e6ea"/></svg>
<div class="combo dis" style="left:278px;width:204px"><div class="abs" style="left:4px;top:3px;width:16px;height:16px;border:1.4px solid #000;background:#fff"></div><svg class="abs" style="left:23px;top:2px" width="18" height="18" viewBox="-9 -9 18 18"><circle r="3.3" fill="#fdd9a4" stroke="#f47a3c" stroke-width="1.2"/><line x1="4.6" y1="0" x2="7.6" y2="0" stroke="#f47a3c" stroke-width="1.4"/><line x1="3.25" y1="3.25" x2="5.37" y2="5.37" stroke="#f47a3c" stroke-width="1.4"/><line x1="0" y1="4.6" x2="0" y2="7.6" stroke="#f47a3c" stroke-width="1.4"/><line x1="-3.25" y1="3.25" x2="-5.37" y2="5.37" stroke="#f47a3c" stroke-width="1.4"/><line x1="-4.6" y1="0" x2="-7.6" y2="0" stroke="#f47a3c" stroke-width="1.4"/><line x1="-3.25" y1="-3.25" x2="-5.37" y2="-5.37" stroke="#f47a3c" stroke-width="1.4"/><line x1="0" y1="-4.6" x2="0" y2="-7.6" stroke="#f47a3c" stroke-width="1.4"/><line x1="3.25" y1="-3.25" x2="5.37" y2="-5.37" stroke="#f47a3c" stroke-width="1.4"/></svg><svg class="abs" style="left:44px;top:1px" width="14" height="20" viewBox="0 0 14 20"><path d="M3.2 9V6.2a3.6 3.6 0 0 1 7.2 0V7" fill="none" stroke="#12304f" stroke-width="1.9"/><rect x="1.2" y="9" width="11" height="8.6" rx="1" fill="#fde9a2" stroke="#12304f" stroke-width="1.4"/><rect x="6" y="11.2" width="1.6" height="4" fill="#12304f"/></svg><span class="abs" style="left:62px;top:2px;font-size:16px;color:#8c8c8c">0</span><svg class="chev" width="9" height="6" viewBox="0 0 9 6"><path d="M.7 .8L4.5 4.6L8.3 .8" fill="none" stroke="#b0b0b0" stroke-width="1.2"/></svg></div>
<div class="combo" style="left:493px;width:142px"><div class="abs" style="left:4px;top:4px;width:16px;height:16px;border:1.4px solid #000;background:#fff"></div><span class="abs" style="left:23px;top:1px">DaCamada</span><svg class="chev" width="9" height="6" viewBox="0 0 9 6"><path d="M.7 .8L4.5 4.6L8.3 .8" fill="none" stroke="#444" stroke-width="1.2"/></svg></div>
<div class="combo dis" style="left:646px;width:218px"><div class="abs" style="left:7px;top:11px;width:59px;height:1.4px;background:#000"></div><span class="abs" style="left:75px;top:1px">DaCamada</span><svg class="chev" width="9" height="6" viewBox="0 0 9 6"><path d="M.7 .8L4.5 4.6L8.3 .8" fill="none" stroke="#b0b0b0" stroke-width="1.2"/></svg></div>
<div class="combo" style="left:875px;width:147px"><div class="abs" style="left:7px;top:11px;width:34px;height:1.4px;background:#000"></div><span class="abs" style="left:49px;top:1px">0.00 mm</span><svg class="chev" width="9" height="6" viewBox="0 0 9 6"><path d="M.7 .8L4.5 4.6L8.3 .8" fill="none" stroke="#444" stroke-width="1.2"/></svg></div>
<div class="combo" style="left:1033px;width:69px"><span class="abs" style="left:3px;top:0px">1000</span><svg class="chev" width="9" height="6" viewBox="0 0 9 6"><path d="M.7 .8L4.5 4.6L8.3 .8" fill="none" stroke="#444" stroke-width="1.2"/></svg></div>
<svg class="ico" style="left:1115.3px;top:5.3px" width="28" height="28" viewBox="-14 -14 28 28"><g><path d="M9.4 -8.42 C1.03 -9.47 -5.76 -5.81 -6.5 0.99 L-9.63 0.26 L-3.67 9.15 L3.96 0.99 L0.51 1.51 C0.51 -3.72 4.17 -6.86 9.4 -8.42 Z" fill="#fde9a2" stroke="#12304f" stroke-width="1.5" stroke-linecap="round" stroke-linejoin="round" /></g></svg>
<svg class="ico" style="left:1147.2px;top:5.3px" width="28" height="28" viewBox="-14 -14 28 28"><g transform="scale(-1,1)"><path d="M9.4 -8.42 C1.03 -9.47 -5.76 -5.81 -6.5 0.99 L-9.63 0.26 L-3.67 9.15 L3.96 0.99 L0.51 1.51 C0.51 -3.72 4.17 -6.86 9.4 -8.42 Z" fill="#fde9a2" stroke="#12304f" stroke-width="1.5" stroke-linecap="round" stroke-linejoin="round" /></g></svg>
<svg class="ico" style="left:1189px;top:4.8px" width="28" height="28" viewBox="-14 -14 28 28"><path d="M-4.15 10.9 L-10.95 2.54 C-12 0.44 -9.38 -0.6 -7.29 0.97 L-4.15 3.58 C-6.24 -1.13 -8.33 -6.36 -7.81 -7.92 L-5.72 -8.45 C-4.15 -6.36 -2.58 -3.22 -1.54 -0.6 L-2.06 -9.49 C-1.01 -11.59 1.6 -11.59 2.13 -9.49 L2.86 -1.13 C3.69 -5.31 4.22 -8.45 6.31 -8.66 L7.67 -7.4 C7.36 -4.26 6.83 -1.13 6.62 0.44 L9.45 -4.26 C11.02 -5.31 12.06 -3.74 11.54 -1.65 L5.79 10.9 Z" fill="#fde9a2" stroke="#12304f" stroke-width="1.7" stroke-linecap="round" stroke-linejoin="round" /></svg>
<svg class="ico" style="left:1231px;top:5.2px" width="28" height="28" viewBox="-14 -14 28 28"><circle cx="-2.6" cy="-2.6" r="8.2" fill="#e6e6e6" /><path d="M-8.04 2.84A7.7 7.7 0 0 1 2.84 -8.04Z" fill="#fde9a2"/><line x1="3.8" y1="3.8" x2="10.5" y2="10.1" stroke="#12304f" stroke-width="3.8" stroke-linecap="round" /><circle cx="-2.6" cy="-2.6" r="8.2" fill="none" stroke="#12304f" stroke-width="2.8"/><path d="M-6 -6.5H-1.5L1 -4V1.2H-6Z" fill="#fff" stroke="#12304f" stroke-width="1.6" stroke-linecap="round" stroke-linejoin="round" /><path d="M-6 -6.5H-2.4V-2H-6Z" fill="#12304f"/></svg>
<svg class="ico" style="left:1263px;top:5.2px" width="28" height="28" viewBox="-14 -14 28 28"><circle cx="-2.6" cy="-2.6" r="8.2" fill="#e6e6e6" /><path d="M-8.04 2.84A7.7 7.7 0 0 1 2.84 -8.04Z" fill="#fde9a2"/><line x1="3.8" y1="3.8" x2="10.5" y2="10.1" stroke="#12304f" stroke-width="3.8" stroke-linecap="round" /><circle cx="-2.6" cy="-2.6" r="8.2" fill="none" stroke="#12304f" stroke-width="2.8"/><g transform="translate(-2.6,-2.6)" fill="#12304f"><path d="M0 -6.4L2.6 -3.4H-2.6Z"/><path d="M0 6.4L2.6 3.4H-2.6Z"/><path d="M-6.4 0L-3.4 -2.6V2.6Z"/><path d="M6.4 0L3.4 -2.6V2.6Z"/></g></svg>
<svg class="ico" style="left:1295px;top:5.4px" width="28" height="28" viewBox="-14 -14 28 28"><circle cx="-2.6" cy="-2.6" r="8.2" fill="#e6e6e6" /><path d="M-8.04 2.84A7.7 7.7 0 0 1 2.84 -8.04Z" fill="#fde9a2"/><line x1="3.8" y1="3.8" x2="10.5" y2="10.1" stroke="#12304f" stroke-width="3.8" stroke-linecap="round" /><circle cx="-2.6" cy="-2.6" r="8.2" fill="none" stroke="#12304f" stroke-width="2.8"/><line x1="-7" y1="-2.6" x2="1.8" y2="-2.6" stroke="#12304f" stroke-width="2" stroke-linecap="butt" /><line x1="-2.6" y1="-7" x2="-2.6" y2="1.8" stroke="#12304f" stroke-width="2" stroke-linecap="butt" /></svg>
<svg class="ico" style="left:1327px;top:5.4px" width="28" height="28" viewBox="-14 -14 28 28"><circle cx="-2.6" cy="-2.6" r="8.2" fill="#e6e6e6" /><path d="M-8.04 2.84A7.7 7.7 0 0 1 2.84 -8.04Z" fill="#fde9a2"/><line x1="3.8" y1="3.8" x2="10.5" y2="10.1" stroke="#12304f" stroke-width="3.8" stroke-linecap="round" /><circle cx="-2.6" cy="-2.6" r="8.2" fill="none" stroke="#12304f" stroke-width="2.8"/><line x1="-7" y1="-2.6" x2="1.8" y2="-2.6" stroke="#12304f" stroke-width="2" stroke-linecap="butt" /></svg>
<svg class="ico" style="left:1359px;top:5.8px" width="28" height="28" viewBox="-14 -14 28 28"><circle cx="-2.6" cy="-2.6" r="8.2" fill="#e6e6e6" /><path d="M-8.04 2.84A7.7 7.7 0 0 1 2.84 -8.04Z" fill="#fde9a2"/><line x1="3.8" y1="3.8" x2="10.5" y2="10.1" stroke="#12304f" stroke-width="3.8" stroke-linecap="round" /><circle cx="-2.6" cy="-2.6" r="8.2" fill="none" stroke="#12304f" stroke-width="2.8"/><g transform="translate(-2.6,-3.4)" stroke="#12304f" stroke-width=".9" fill="#fde9a2"><path d="M-5 3.4L0 1.4L5 3.4L0 5.6Z"/><path d="M-5 1L0 -1L5 1L0 3.2Z"/><path d="M-5 -1.4L0 -3.4L5 -1.4L0 .8Z"/></g></svg>
<svg class="ico" style="left:1401px;top:4.8px" width="28" height="28" viewBox="-14 -14 28 28"><rect x="-10.98" y="-10.85" width="17.26" height="17.26" fill="#fff"/><rect x="-10.98" y="-10.85" width="17.26" height="3.6" fill="#fde9a2"/><rect x="-10.98" y="-10.85" width="17.26" height="17.26" fill="none" stroke="#12304f" stroke-width="1.6"/><line x1="-5.23" y1="-10.85" x2="-5.23" y2="6.41" stroke="#12304f" stroke-width="1.2" stroke-linecap="butt" /><line x1="0.52" y1="-10.85" x2="0.52" y2="6.41" stroke="#12304f" stroke-width="1.2" stroke-linecap="butt" /><line x1="-10.98" y1="-7.25" x2="6.28" y2="-7.25" stroke="#12304f" stroke-width="1.2" stroke-linecap="butt" /><line x1="-10.98" y1="-3.84" x2="6.28" y2="-3.84" stroke="#12304f" stroke-width="1.2" stroke-linecap="butt" /><line x1="-10.98" y1="-0.42" x2="6.28" y2="-0.42" stroke="#12304f" stroke-width="1.2" stroke-linecap="butt" /><line x1="-10.98" y1="2.99" x2="6.28" y2="2.99" stroke="#12304f" stroke-width="1.2" stroke-linecap="butt" /><line x1="5.09" y1="6.06" x2="10.77" y2="10.69" stroke="#12304f" stroke-width="2.4" stroke-linecap="round" /><circle cx="2.09" cy="3.06" r="4.9" fill="#fff" stroke="#12304f" stroke-width="1.7"/><path d="M-0.88 6.03A4.2 4.2 0 0 1 5.06 0.09Z" fill="#fde9a2"/></svg>
<svg class="ico" style="left:1443px;top:4.8px" width="28" height="28" viewBox="-14 -14 28 28"><path d="M-9.26 -2.18V-9.18H-2.26 M2.36 -9.18H9.36V-2.18 M9.36 2.13V9.13H2.36 M-2.26 9.13H-9.26V2.13" fill="none" stroke="#1c3050" stroke-width="3" stroke-linecap="butt" stroke-linejoin="miter" stroke-linecap="butt"/></svg>
<div class="abs" style="left:1494px;top:22px;width:10px;height:2px;background:#12304f"></div>
<svg class="ico" style="left:1522px;top:13px" width="18" height="12" viewBox="0 0 18 12"><rect x="1.1" y="1.4" width="8.6" height="7.2" fill="#e8e8e8" stroke="#12304f" stroke-width="1.3"/><line x1="1.1" y1="2" x2="9.7" y2="2" stroke="#12304f" stroke-width="1.8"/><rect x="7.6" y="3.8" width="8.2" height="6.6" fill="#e8e8e8" stroke="#12304f" stroke-width="1.3"/><line x1="7.6" y1="4.3" x2="15.8" y2="4.3" stroke="#12304f" stroke-width="1.6"/></svg>
<div class="abs" style="left:1558px;top:9.5px;font:bold 16.4px/18px 'DejaVu Sans','Liberation Sans',sans-serif;color:#12304f">x</div>
</div>
<div class="ltb" style="left:0;top:171px;width:29px;height:433px;border-left:none"></div>
<div class="ltb" style="left:32px;top:171px;width:32px;height:461px"></div>
<div class="abs" style="left:65px;top:168px;width:2px;height:728px;background:#f2f2f2;border-right:1px solid #cfcfcf"></div>
<div class="grip" style="left:0px;top:175px;width:26px"></div>
<div class="grip" style="left:35px;top:175px;width:26px"></div>
<svg class="ico" style="left:-1px;top:179.5px" width="28" height="28" viewBox="-14 -14 28 28"><line x1="-7.81" y1="9.45" x2="7.49" y2="-8.31" stroke="#12304f" stroke-width="2" stroke-linecap="butt" /><rect x="5.65" y="-10.8" width="4.2" height="4.2" fill="#fff4c0" stroke="#f47a3c" stroke-width="1.3"/><rect x="-10.17" y="7.74" width="4.2" height="4.2" fill="#fff4c0" stroke="#f47a3c" stroke-width="1.3"/></svg>
<svg class="ico" style="left:-1px;top:207.5px" width="28" height="28" viewBox="-14 -14 28 28"><path d="M-9.76 5.7 L6.06 5.7 A4.6 4.6 0 0 0 6.06 -3.64" fill="none" stroke="#12304f" stroke-width="2" stroke-linecap="round" stroke-linejoin="round" /><rect x="-12.05" y="3.8" width="3.8" height="3.8" fill="#fff4c0" stroke="#f47a3c" stroke-width="1.2"/><rect x="4.16" y="3.8" width="3.8" height="3.8" fill="#fff4c0" stroke="#f47a3c" stroke-width="1.2"/><rect x="4.16" y="-5.54" width="3.8" height="3.8" fill="#fff4c0" stroke="#f47a3c" stroke-width="1.2"/></svg>
<svg class="ico" style="left:-1px;top:235.5px" width="28" height="28" viewBox="-14 -14 28 28"><rect x="-2.39" y="-1.32" width="4.2" height="4.2" fill="#fff4c0" stroke="#f47a3c" stroke-width="1.3"/></svg>
<svg class="ico" style="left:-1px;top:263.5px" width="28" height="28" viewBox="-14 -14 28 28"><circle cx="-0.03" cy="0.01" r="6.6" fill="#fde9a2" stroke="#12304f" stroke-width="1.6"/><path d="M-0.03 0.01V-6.59A6.6 6.6 0 0 0 -6.63 0.01Z M-0.03 0.01V6.61A6.6 6.6 0 0 0 6.57 0.01Z" fill="#12304f"/><line x1="-11.03" y1="0.01" x2="10.97" y2="0.01" stroke="#12304f" stroke-width="1.5" stroke-linecap="butt" /><line x1="-0.03" y1="-10.99" x2="-0.03" y2="11.01" stroke="#12304f" stroke-width="1.5" stroke-linecap="butt" /></svg>
<svg class="ico" style="left:-1px;top:291.5px" width="28" height="28" viewBox="-14 -14 28 28"><path d="M-8.46 8.43 C-9.11 -1.94 -2.63 -8.42 7.1 -8.94" fill="none" stroke="#12304f" stroke-width="2.2" stroke-linecap="round" stroke-linejoin="round" /><rect x="5.65" y="-11.17" width="4.2" height="4.2" fill="#fff4c0" stroke="#f47a3c" stroke-width="1.3"/><rect x="-10.56" y="7.63" width="4.2" height="4.2" fill="#fff4c0" stroke="#f47a3c" stroke-width="1.3"/></svg>
<svg class="ico" style="left:-1px;top:319.5px" width="28" height="28" viewBox="-14 -14 28 28"><path d="M-6.4 6.5A9 9 0 0 1 6.33 -6.22Z" fill="#fde9a2"/><circle cx="-0.03" cy="0.14" r="9.6" fill="none" stroke="#12304f" stroke-width="2.2"/><rect x="-1.93" y="-1.76" width="3.8" height="3.8" fill="#fff4c0" stroke="#f47a3c" stroke-width="1.2"/></svg>
<svg class="ico" style="left:-1px;top:347.5px" width="28" height="28" viewBox="-14 -14 28 28"><clipPath id="ecl2"><ellipse cx="-0.29" cy="0.15" rx="10" ry="6.4"/></clipPath><path d="M-20.29 20.15l40 -40h-40z" fill="#fde9a2" clip-path="url(#ecl2)"/><ellipse cx="-0.29" cy="0.15" rx="10.2" ry="6.6" fill="none" stroke="#12304f" stroke-width="2.2"/><rect x="-2.19" y="-1.75" width="3.8" height="3.8" fill="#fff4c0" stroke="#f47a3c" stroke-width="1.2"/></svg>
<svg class="ico" style="left:-1px;top:375.5px" width="28" height="28" viewBox="-14 -14 28 28"><path d="M-9.37 -5.55H9.3L-9.37 7.41Z" fill="#fde9a2"/><rect x="-9.37" y="-5.55" width="18.67" height="12.97" fill="none" stroke="#12304f" stroke-width="2.2"/><rect x="7.4" y="-7.45" width="3.8" height="3.8" fill="#fff4c0" stroke="#f47a3c" stroke-width="1.2"/><rect x="-11.27" y="5.51" width="3.8" height="3.8" fill="#fff4c0" stroke="#f47a3c" stroke-width="1.2"/></svg>
<svg class="ico" style="left:-1px;top:403.5px" width="28" height="28" viewBox="-14 -14 28 28"><path d="M-0.29 -5.18 L-2.63 0.65 L2.04 0.65 Z" fill="#fde9a2"/><path d="M-7.55 7.78 L-0.29 -10.37 L7.1 7.78 M-4.18 0.91 L3.6 0.91" fill="none" stroke="#12304f" stroke-width="2.9" stroke-linecap="round" stroke-linejoin="round" /><line x1="-9.76" y1="11.03" x2="9.3" y2="11.03" stroke="#f47a3c" stroke-width="1.8" stroke-linecap="butt" /></svg>
<svg class="ico" style="left:-1px;top:431.5px" width="28" height="28" viewBox="-14 -14 28 28"><path d="M-1.33 -7.9 L10.34 1.18 L1.26 10.9 L0.61 -2.71 Z" fill="#fde9a2"/><path d="M-9.76 -8.55 L-1.98 -9.84 L10.6 1.44 L1.26 11.16 L-10.67 -1.42 Z" fill="none" stroke="#12304f" stroke-width="1.8" stroke-linecap="round" stroke-linejoin="round" /><circle cx="-5.87" cy="-4.27" r="1.9" fill="#f4814a" /><path d="M-1.59 -2.71 L3.21 -0.12 M-0.68 3.12 L3.86 5.72" fill="none" stroke="#12304f" stroke-width="2.2" stroke-linecap="round" stroke-linejoin="round" /></svg>
<svg class="ico" style="left:-1px;top:459.5px" width="28" height="28" viewBox="-14 -14 28 28"><path d="M-10.15 -8.67H4.12L-10.15 1.7Z" fill="#fde9a2"/><rect x="-10.15" y="-8.67" width="14.26" height="10.37" fill="none" stroke="#12304f" stroke-width="1.7"/><circle cx="2.56" cy="4.56" r="7.2" fill="#e9e9e9" /><path d="M-2.25 9.36A6.8 6.8 0 0 1 7.37 -0.25Z" fill="#fde9a2"/><circle cx="2.56" cy="4.56" r="7.2" fill="none" stroke="#12304f" stroke-width="1.7"/><circle cx="-10.41" cy="1.7" r="1.5" fill="#fff4c0" stroke="#f47a3c" stroke-width="1"/><circle cx="2.3" cy="4.68" r="1.3" fill="#fff4c0" stroke="#f47a3c" stroke-width="1"/></svg>
<svg class="ico" style="left:-1px;top:487.5px" width="28" height="28" viewBox="-14 -14 28 28"><path d="M-10.15 -8.66H4.12L-10.15 1.71Z" fill="#fde9a2"/><rect x="-10.15" y="-8.66" width="14.26" height="10.37" fill="none" stroke="#12304f" stroke-width="1.7"/><circle cx="2.56" cy="4.56" r="7.2" fill="#e9e9e9" /><path d="M-2.25 9.37A6.8 6.8 0 0 1 7.37 -0.25Z" fill="#fde9a2"/><circle cx="2.56" cy="4.56" r="7.2" fill="none" stroke="#12304f" stroke-width="1.7"/><circle cx="-10.41" cy="1.71" r="1.5" fill="#fff4c0" stroke="#f47a3c" stroke-width="1"/><circle cx="2.3" cy="4.69" r="1.3" fill="#fff4c0" stroke="#f47a3c" stroke-width="1"/></svg>
<svg class="ico" style="left:-1px;top:515.5px" width="28" height="28" viewBox="-14 -14 28 28"><path d="M-10.15 -8.48H0.61L-10.15 1.89Z" fill="#fde9a2"/><rect x="-10.15" y="-8.48" width="10.76" height="10.37" fill="none" stroke="#12304f" stroke-width="1.7"/><circle cx="2.56" cy="4.75" r="7.2" fill="#e9e9e9" /><path d="M-2.25 9.55A6.8 6.8 0 0 1 7.37 -0.06Z" fill="#fde9a2"/><circle cx="2.56" cy="4.75" r="7.2" fill="none" stroke="#12304f" stroke-width="1.7"/><path d="M-2.89 -0.05 C-1.98 -5.24 1.26 -7.83 5.15 -7.83 L4.89 -10.68 L10.99 -5.89 L5.8 -2 L5.41 -4.59 C1.91 -4.98 -0.68 -3.29 -1.98 1.25 Z" fill="#f58b4c" stroke="#12304f" stroke-width="0.9" stroke-linecap="round" stroke-linejoin="round" /><circle cx="-10.41" cy="1.89" r="1.5" fill="#fff4c0" stroke="#f47a3c" stroke-width="1"/><circle cx="2.3" cy="4.88" r="1.3" fill="#fff4c0" stroke="#f47a3c" stroke-width="1"/></svg>
<svg class="ico" style="left:-1px;top:543.5px" width="28" height="28" viewBox="-14 -14 28 28"><clipPath id="hc13"><path d="M-7.17 -6.27 L7.1 -6.27 L-7.17 7.61 Z"/></clipPath><path d="M-7.17 -6.27 L7.1 -6.27 L-7.17 7.61 Z" fill="#fdf0a0"/><path d="M-7.17 -3.42 L-1.98 -8.6M-7.17 -0.3 L1.13 -8.6M-7.17 2.81 L4.24 -8.6M-7.17 5.92 L7.36 -8.6M-7.17 9.03 L10.47 -8.6M-7.17 12.14 L13.58 -8.6M-7.17 15.26 L16.69 -8.6M-7.17 18.37 L19.8 -8.6M-7.17 21.48 L22.92 -8.6M-7.17 24.59 L26.03 -8.6" stroke="#12304f" stroke-width="1.1" clip-path="url(#hc13)"/><line x1="-11.44" y1="-7.31" x2="11.38" y2="-7.31" stroke="#12304f" stroke-width="2.4" stroke-linecap="butt" /><line x1="-11.44" y1="8.51" x2="11.38" y2="8.51" stroke="#12304f" stroke-width="2.4" stroke-linecap="butt" /><line x1="-8.07" y1="-10.94" x2="-8.07" y2="11.88" stroke="#12304f" stroke-width="2.4" stroke-linecap="butt" /><line x1="8" y1="-10.94" x2="8" y2="11.88" stroke="#12304f" stroke-width="2.4" stroke-linecap="butt" /><line x1="-4.18" y1="11.11" x2="10.99" y2="-3.68" stroke="#12304f" stroke-width="2.4" stroke-linecap="butt" /></svg>
<svg class="ico" style="left:-1px;top:571.5px" width="28" height="28" viewBox="-14 -14 28 28"><path d="M-7.17 -5.48 L7.1 -5.48 L-7.17 8.39 Z" fill="#fdf0a0"/><line x1="-11.44" y1="-6.52" x2="11.38" y2="-6.52" stroke="#12304f" stroke-width="2.4" stroke-linecap="butt" /><line x1="-11.44" y1="9.3" x2="11.38" y2="9.3" stroke="#12304f" stroke-width="2.4" stroke-linecap="butt" /><line x1="-8.07" y1="-10.15" x2="-8.07" y2="12.67" stroke="#12304f" stroke-width="2.4" stroke-linecap="butt" /><line x1="8" y1="-10.15" x2="8" y2="12.67" stroke="#12304f" stroke-width="2.4" stroke-linecap="butt" /><line x1="-4.18" y1="11.89" x2="10.99" y2="-2.89" stroke="#12304f" stroke-width="2.4" stroke-linecap="butt" /></svg>
<svg class="ico" style="left:34px;top:179.5px" width="28" height="28" viewBox="-14 -14 28 28"><path d="M-4.81 3.28 L3.91 -7.68 L10.85 -7.01 L2.46 4.96 Z" fill="#fde9a2"/><line x1="-5.04" y1="3.5" x2="3.69" y2="-7.46" stroke="#12304f" stroke-width="1.9" stroke-linecap="round" /><line x1="2.23" y1="5.29" x2="10.85" y2="-6.79" stroke="#12304f" stroke-width="1.9" stroke-linecap="round" /><path d="M-5.71 4.4 L-2.8 1.71 L1.9 5.07 L-1.68 7.53 Z" fill="#f4814a" stroke="#12304f" stroke-width="1.4" stroke-linecap="round" stroke-linejoin="round" /><line x1="-11.53" y1="7.31" x2="10.85" y2="7.31" stroke="#12304f" stroke-width="2" stroke-linecap="butt" /></svg>
<svg class="ico" style="left:34px;top:207.5px" width="28" height="28" viewBox="-14 -14 28 28"><circle cx="-8.45" cy="-5.58" r="3.2" fill="#fde9a2" stroke="#12304f" stroke-width="1.3"/><circle cx="5.81" cy="8.03" r="3.2" fill="#fde9a2" stroke="#12304f" stroke-width="1.3"/><circle cx="1.27" cy="5.44" r="3.4" fill="#fde9a2" stroke="#12304f" stroke-width="1.3"/><path d="M-5.21 -9.08 C1.27 -12.06 7.11 -9.47 9.05 -3.64 L11.64 -2.6 L5.81 4.14 L1.01 -2.99 L3.86 -2.99 C3.22 -6.23 -0.03 -8.56 -3.92 -8.17 Z" fill="#f4814a" stroke="#12304f" stroke-width="1.1" stroke-linecap="round" stroke-linejoin="round" /></svg>
<svg class="ico" style="left:34px;top:235.5px" width="28" height="28" viewBox="-14 -14 28 28"><path d="M-11.05 8.3 L-2.62 8.3 L-2.62 -6.74 Z" fill="#fde9a2" stroke="#12304f" stroke-width="1.4" stroke-linecap="round" stroke-linejoin="round" /><path d="M2.57 -6.74 L2.57 8.3 L11 8.3 Z" fill="#fde9a2" stroke="#12304f" stroke-width="1.4" stroke-linecap="round" stroke-linejoin="round" /><line x1="-0.03" y1="-9.85" x2="-0.03" y2="11.8" stroke="#f47a3c" stroke-width="1.6" stroke-linecap="butt" /></svg>
<svg class="ico" style="left:34px;top:263.5px" width="28" height="28" viewBox="-14 -14 28 28"><path d="M11 7.14 L-6.51 7.14 C-11.7 6.49 -11.7 -1.29 -5.86 -1.94 C-5.21 -8.42 3.22 -9.07 4.51 -1.94 C6.46 -1.94 9.05 -1.94 11 -1.94 L11 -1.94" fill="none" stroke="#12304f" stroke-width="2.2" stroke-linecap="round" stroke-linejoin="round" /><path d="M11 4.55 L-5.21 4.55 C-8.45 3.9 -8.45 1.04 -4.56 0.66 C-2.62 0.27 1.27 0.27 3.86 0.66 L11 0.66" fill="none" stroke="#f59a6c" stroke-width="1.3" stroke-linecap="round" stroke-linejoin="round" /></svg>
<svg class="ico" style="left:34px;top:291.5px" width="28" height="28" viewBox="-14 -14 28 28"><rect x="-11.44" y="-10.76" width="9.8" height="9.8" fill="#fde9a2" stroke="#12304f" stroke-width="1.3"/><rect x="1.27" y="-10.76" width="9.8" height="9.8" fill="#fde9a2" stroke="#12304f" stroke-width="1.3"/><rect x="-11.44" y="1.95" width="9.8" height="9.8" fill="#fde9a2" stroke="#12304f" stroke-width="1.3"/><rect x="1.27" y="1.95" width="9.8" height="9.8" fill="#fde9a2" stroke="#12304f" stroke-width="1.3"/></svg>
<svg class="ico" style="left:34px;top:319.5px" width="28" height="28" viewBox="-14 -14 28 28"><line x1="-8.03" y1="0.14" x2="7.97" y2="0.14" stroke="#12304f" stroke-width="2.4" stroke-linecap="butt" /><line x1="-0.03" y1="-7.86" x2="-0.03" y2="8.14" stroke="#12304f" stroke-width="2.4" stroke-linecap="butt" /><path d="M11.6 0L6.6 -4.2V4.2Z" fill="#12304f" transform="translate(-0.03,0.14) rotate(0)"/><path d="M11.6 0L6.6 -4.2V4.2Z" fill="#12304f" transform="translate(-0.03,0.14) rotate(90)"/><path d="M11.6 0L6.6 -4.2V4.2Z" fill="#12304f" transform="translate(-0.03,0.14) rotate(180)"/><path d="M11.6 0L6.6 -4.2V4.2Z" fill="#12304f" transform="translate(-0.03,0.14) rotate(270)"/></svg>
<svg class="ico" style="left:34px;top:347.5px" width="28" height="28" viewBox="-14 -14 28 28"><path d="M-6.73 0.67A8 8 0 1 0 1.27 -7.33" fill="none" stroke="#12304f" stroke-width="3.4"/><path d="M-12.53 2.17L-1.33 2.17L-6.93 -5.83Z" fill="#12304f"/></svg>
<svg class="ico" style="left:34px;top:375.5px" width="28" height="28" viewBox="-14 -14 28 28"><path d="M-6.25 -4.9 L0.23 -10.35 L8.4 -2.31 L1.92 3.26 Z" fill="#fde9a2" stroke="#12304f" stroke-width="1.3" stroke-linecap="round" stroke-linejoin="round" /><path d="M-10.14 3.26 L-4.18 -1.4 L1.92 4.17 L-3.92 9.36 Z" fill="#fde9a2" stroke="#12304f" stroke-width="1.3" stroke-linecap="round" stroke-linejoin="round" /><line x1="-2.62" y1="11.95" x2="11.64" y2="-1.4" stroke="#f47a3c" stroke-width="1.6" stroke-linecap="butt" /></svg>
<svg class="ico" style="left:34px;top:403.5px" width="28" height="28" viewBox="-14 -14 28 28"><rect x="-10.66" y="-10.37" width="21.65" height="21.65" fill="#fde9a2" stroke="#12304f" stroke-width="1.5"/><path d="M-9.49 0.91 L0.62 0.91 L0.62 10.25 L-9.49 10.25 Z" fill="none" stroke="#12304f" stroke-width="1.5" stroke-linecap="butt" stroke-dasharray="2 1.6"/></svg>
<svg class="ico" style="left:34px;top:431.5px" width="28" height="28" viewBox="-14 -14 28 28"><path d="M-11.05 -10.49 L4.51 -10.49 L11 11.29 L-11.05 11.29 Z" fill="#fde9a2" stroke="#12304f" stroke-width="1.5" stroke-linecap="round" stroke-linejoin="round" /><line x1="-0.03" y1="-9.2" x2="-0.03" y2="10.25" stroke="#12304f" stroke-width="1.5" stroke-linecap="butt" stroke-dasharray="1.6 1.8"/></svg>
<svg class="ico" style="left:34px;top:459.5px" width="28" height="28" viewBox="-14 -14 28 28"><line x1="-11.44" y1="0.15" x2="-0.67" y2="0.15" stroke="#12304f" stroke-width="2.2" stroke-linecap="butt" /><line x1="1.92" y1="0.15" x2="11.9" y2="0.15" stroke="#12304f" stroke-width="1.6" stroke-linecap="butt" stroke-dasharray="1.6 2"/><line x1="-3.27" y1="10.13" x2="4.51" y2="-9.71" stroke="#f47a3c" stroke-width="1.8" stroke-linecap="butt" /></svg>
<svg class="ico" style="left:34px;top:487.5px" width="28" height="28" viewBox="-14 -14 28 28"><line x1="-11.44" y1="-0.11" x2="-3.27" y2="-0.11" stroke="#12304f" stroke-width="2.2" stroke-linecap="butt" /><line x1="-2.36" y1="-0.11" x2="7.11" y2="-0.11" stroke="#12304f" stroke-width="1.6" stroke-linecap="butt" stroke-dasharray="1.6 2"/><line x1="4.51" y1="8.71" x2="11.64" y2="-8.79" stroke="#f47a3c" stroke-width="1.8" stroke-linecap="butt" /></svg>
<svg class="ico" style="left:34px;top:515.5px" width="28" height="28" viewBox="-14 -14 28 28"><rect x="-11.05" y="-8.87" width="22.43" height="20.23" fill="#fde9a2" stroke="#12304f" stroke-width="1.5"/><rect x="-3.27" y="-10.27" width="7.13" height="3" fill="#dfe4ec"/><rect x="-6.81" y="-10.08" width="3.2" height="3.2" fill="#fff4c0" stroke="#f47a3c" stroke-width="1.1"/><rect x="3.82" y="-10.08" width="3.2" height="3.2" fill="#fff4c0" stroke="#f47a3c" stroke-width="1.1"/></svg>
<svg class="ico" style="left:34px;top:543.5px" width="28" height="28" viewBox="-14 -14 28 28"><line x1="3.86" y1="-9.64" x2="11.38" y2="-9.64" stroke="#12304f" stroke-width="2" stroke-linecap="butt" /><line x1="-10.14" y1="4.36" x2="-10.14" y2="11.88" stroke="#12304f" stroke-width="2" stroke-linecap="butt" /><path d="M2.83 -9.64 L-10.14 -9.64 L-10.14 3.33" fill="none" stroke="#12304f" stroke-width="1.4" stroke-linecap="butt" stroke-linejoin="round" stroke-dasharray="1.5 1.8"/><path d="M-10.14 4.36 C-9.75 -4.06 -4.56 -9.25 3.86 -9.64" fill="none" stroke="#f47a3c" stroke-width="1.8" stroke-linecap="round" stroke-linejoin="round" /></svg>
<svg class="ico" style="left:34px;top:571.5px" width="28" height="28" viewBox="-14 -14 28 28"><path d="M11 -9.11 L-10.14 -9.11 L-10.14 11.11" fill="none" stroke="#12304f" stroke-width="1.9" stroke-linecap="butt" stroke-linejoin="miter" /><line x1="-10.14" y1="3.33" x2="2.31" y2="-9.11" stroke="#f47a3c" stroke-width="1.8" stroke-linecap="butt" /></svg>
<svg class="ico" style="left:34px;top:599.5px" width="28" height="28" viewBox="-14 -14 28 28"><polygon points="-3.43 -11.04 0.34 -6.37 5.54 -10.32 3.57 -4.04 9.85 -4.04 5.54 0.45 11.29 5.48 1.24 4.04 -2.54 12.3 -2.71 3.68 -9.9 5.66 -4.87 0.09 -11.69 -5.11 -4.15 -4.21" fill="#fdf49a" stroke="#12304f" stroke-width="1.5" stroke-linejoin="miter"/><polygon points="-1.82 -5.83 0.07 -3.5 2.67 -5.47 1.68 -2.33 4.83 -2.33 2.67 -0.09 5.54 2.43 0.52 1.71 -1.37 5.84 -1.46 1.53 -5.05 2.52 -2.54 -0.26 -5.95 -2.87 -2.18 -2.42" fill="#f4813f"/></svg>
<div class="abs" style="left:1884px;top:168px;width:4px;height:728px;background:#f2f2f2;border-left:1px solid #dadada"></div>
<div class="abs" style="left:1888px;top:169px;width:24px;height:752px;background:#ebebeb"></div>
<div class="ltb" style="left:1888px;top:171px;width:24px;height:405px;border-left:1px solid #c4c4c4;border-right:none"></div>
<div class="grip" style="left:1891px;top:175px;width:21px;border-right:none"></div>
<div class="abs" style="left:1889px;top:178px;width:23px;height:396px;overflow:hidden">
<svg class="ico" style="left:1.2px;top:2px" width="28" height="28" viewBox="-14 -14 28 28"><line x1="-7.31" y1="7.01" x2="6.44" y2="-7" stroke="#12304f" stroke-width="1.7" stroke-linecap="butt" /><circle cx="-7.31" cy="7.01" r="2.5" fill="#fff" stroke="#f47a3c" stroke-width="1.6"/><circle cx="6.44" cy="-7" r="2.5" fill="#fff" stroke="#f47a3c" stroke-width="1.6"/></svg>
<svg class="ico" style="left:1.2px;top:30px" width="28" height="28" viewBox="-14 -14 28 28"><line x1="-8.6" y1="7.53" x2="9.29" y2="-9.32" stroke="#12304f" stroke-width="1.7" stroke-linecap="butt" /><circle cx="-0.04" cy="0.01" r="2.5" fill="#fff" stroke="#f47a3c" stroke-width="1.6"/></svg>
<svg class="ico" style="left:1.2px;top:58px" width="28" height="28" viewBox="-14 -14 28 28"><circle cx="-0.04" cy="0.02" r="9" fill="#fdeaa0" stroke="#12304f" stroke-width="1.9"/><circle cx="-0.04" cy="0.02" r="5.5" fill="#fdf0b8" /><circle cx="-0.04" cy="0.02" r="2.2" fill="#fff" stroke="#f47a3c" stroke-width="1.6"/></svg>
<svg class="ico" style="left:1.2px;top:86px" width="28" height="28" viewBox="-14 -14 28 28"><line x1="-8.6" y1="-8.27" x2="9.29" y2="8.58" stroke="#12304f" stroke-width="1.7" stroke-linecap="butt" /><line x1="-8.6" y1="7.94" x2="9.29" y2="-8.92" stroke="#12304f" stroke-width="1.7" stroke-linecap="butt" /><circle cx="-0.43" cy="-0.23" r="2.5" fill="#fff" stroke="#f47a3c" stroke-width="1.6"/></svg>
<svg class="ico" style="left:1.2px;top:114px" width="28" height="28" viewBox="-14 -14 28 28"><line x1="-9.51" y1="9.49" x2="9.29" y2="-8.92" stroke="#12304f" stroke-width="1.7" stroke-linecap="butt" /><line x1="-9.51" y1="-9.18" x2="9.29" y2="9.23" stroke="#12304f" stroke-width="1.7" stroke-linecap="butt" stroke-dasharray="2.2 2.2"/><circle cx="-0.3" cy="0.15" r="2.5" fill="#fff" stroke="#f47a3c" stroke-width="1.6"/></svg>
<svg class="ico" style="left:1.2px;top:142px" width="28" height="28" viewBox="-14 -14 28 28"><line x1="-4.32" y1="-8.01" x2="9.29" y2="-8.01" stroke="#12304f" stroke-width="1.7" stroke-linecap="butt" stroke-dasharray="2.4 2.6"/><line x1="-7.95" y1="-4.51" x2="-7.95" y2="12.35" stroke="#12304f" stroke-width="1.7" stroke-linecap="butt" stroke-dasharray="2.4 2.6"/><circle cx="-7.95" cy="-8.01" r="2.6" fill="#fff" stroke="#f47a3c" stroke-width="1.6"/></svg>
<svg class="ico" style="left:1.2px;top:170px" width="28" height="28" viewBox="-14 -14 28 28"><path d="M-8.86 -9.82H5.4L-8.86 0.55Z" fill="#fde9a2"/><rect x="-8.86" y="-9.82" width="14.26" height="10.37" fill="none" stroke="#12304f" stroke-width="1.7"/><circle cx="3.46" cy="3.8" r="7.2" fill="#e9e9e9" /><path d="M-1.35 8.6A6.8 6.8 0 0 1 8.26 -1.01Z" fill="#fde9a2"/><circle cx="3.46" cy="3.8" r="7.2" fill="none" stroke="#12304f" stroke-width="1.7"/><circle cx="-8.86" cy="0.55" r="2" fill="#fff" stroke="#f47a3c" stroke-width="1.6"/></svg>
<svg class="ico" style="left:1.2px;top:198px" width="28" height="28" viewBox="-14 -14 28 28"><line x1="-0.3" y1="-6.7" x2="-0.3" y2="5.88" stroke="#12304f" stroke-width="1.7" stroke-linecap="butt" /><line x1="-10.42" y1="5.88" x2="9.29" y2="5.88" stroke="#12304f" stroke-width="1.7" stroke-linecap="butt" /><circle cx="-0.3" cy="6.14" r="2.5" fill="#fff" stroke="#f47a3c" stroke-width="1.6"/></svg>
<svg class="ico" style="left:1.2px;top:226px" width="28" height="28" viewBox="-14 -14 28 28"><line x1="-9.51" y1="8.58" x2="6.7" y2="-6.07" stroke="#12304f" stroke-width="1.7" stroke-linecap="butt" /><circle cx="6.05" cy="3.39" r="2.6" fill="#fff" stroke="#12304f" stroke-width="1.6"/><circle cx="1.25" cy="-1.4" r="2.5" fill="#fff" stroke="#f47a3c" stroke-width="1.6"/></svg>
<svg class="ico" style="left:1.2px;top:254px" width="28" height="28" viewBox="-14 -14 28 28"><circle cx="-0.3" cy="0.03" r="2.5" fill="#fff" stroke="#f47a3c" stroke-width="1.6"/></svg>
<svg class="ico" style="left:1.2px;top:282px" width="28" height="28" viewBox="-14 -14 28 28"><circle cx="-0.3" cy="0.17" r="8.4" fill="#fdeaa0" stroke="#12304f" stroke-width="1.8"/><circle cx="-0.3" cy="-8.43" r="2.5" fill="#fff" stroke="#f47a3c" stroke-width="1.6"/><circle cx="-0.3" cy="8.77" r="2.5" fill="#fff" stroke="#f47a3c" stroke-width="1.6"/><circle cx="-8.9" cy="0.17" r="2.5" fill="#fff" stroke="#f47a3c" stroke-width="1.6"/><circle cx="8.3" cy="0.17" r="2.5" fill="#fff" stroke="#f47a3c" stroke-width="1.6"/></svg>
<svg class="ico" style="left:1.2px;top:310px" width="28" height="28" viewBox="-14 -14 28 28"><circle cx="-0.04" cy="0.43" r="8.6" fill="#fdeaa0" stroke="#12304f" stroke-width="1.8"/><path d="M-11.45 -1.51 L-9.12 -3.46 L-8.6 -0.22" fill="none" stroke="#12304f" stroke-width="1.3" stroke-linecap="round" stroke-linejoin="round" /><path d="M-1.08 -11.24 L-3.42 -8.39" fill="none" stroke="#12304f" stroke-width="1.3" stroke-linecap="round" stroke-linejoin="round" /><circle cx="-6.27" cy="-6.05" r="2.5" fill="#fff" stroke="#f47a3c" stroke-width="1.6"/></svg>
<svg class="ico" style="left:1.2px;top:338px" width="28" height="28" viewBox="-14 -14 28 28"><path d="M-6.27 -7.7 L-6.27 1.38 A5.85 5.85 0 0 0 5.4 1.38 L5.4 -7.7" fill="none" stroke="#12304f" stroke-width="4.5" stroke-linecap="butt" stroke-linejoin="round" /><rect x="-7.17" y="-7.74" width="1.8" height="2.2" fill="#fff27a"/><rect x="4.5" y="-7.74" width="1.8" height="2.2" fill="#fff27a"/><line x1="-11.45" y1="10.84" x2="9.29" y2="-10.55" stroke="#f58b4c" stroke-width="2.2" stroke-linecap="butt" /></svg>
<svg class="ico" style="left:1.2px;top:366px" width="28" height="28" viewBox="-14 -14 28 28"><path d="M-6.27 -7.69 L-6.27 1.38 A5.85 5.85 0 0 0 5.4 1.38 L5.4 -7.69" fill="none" stroke="#12304f" stroke-width="4.5" stroke-linecap="butt" stroke-linejoin="round" /><rect x="-7.17" y="-7.74" width="1.8" height="2.2" fill="#fff27a"/><rect x="4.5" y="-7.74" width="1.8" height="2.2" fill="#fff27a"/><rect x="6.18" y="6.83" width="3" height="3" fill="none" stroke="#f47a3c" stroke-width="1.2"/></svg>
</div>
<div id="btabs">
<div class="btab" style="left:0;width:67px;background:#fff;font-weight:bold;top:-1px;height:24px;border-bottom:1px solid #dcdcdc;line-height:27px;font-size:12.2px;letter-spacing:.5px;padding-right:3px">C A D</div>
<div class="btab" style="left:67px;width:77px;border-right:1px solid #dcdcdc;height:23px;line-height:24px;font-size:12.6px;letter-spacing:.55px;padding-right:2px">RASTER</div>
</div>
<div id="status">
<div class="abs" style="left:2px;top:0px;color:#000;font-size:12.4px">799916.858 , 7928788.111</div>
<div class="cell" style="left:0px;width:220px"></div>
<div class="cell" style="left:220px;width:72px">Ortho - F8</div>
<div class="cell" style="left:292px;width:72px">Osnap - F3</div>
<div class="cell" style="left:364px;width:72px">Atrib - F4</div>
<div class="cell" style="left:436px;width:72px">SGrip - F5</div>
<div class="cell" style="left:508px;width:72px">Grid - F7</div>
<div class="cell" style="left:580px;width:72px">Snap - F9</div>
<div class="cell" style="left:652px;width:81px">RTexto - F10</div>
<div class="cell" style="left:733px;width:74px">Nome - F11</div>
<div class="cell" style="left:807px;width:72px">Filtro - F12</div>
<div class="cell" style="left:879px;width:72px">Snap Pto</div>
<div class="cell" style="left:951px;width:72px">Snap 3D</div>
</div>
<div id="cmd">
<div style="top:3px">Comando: Hachura (Hatch)</div>
<div style="top:23px;letter-spacing:-.2px;word-spacing:1.8px">Selecione objetos: 1 "Polihachura" na camada "0", 1 Total.</div>
<div style="top:44px;left:0;width:142px;height:16px;background:#f3f3f3"></div>
<div style="top:44px;font-weight:bold;color:#16294d">Selecione objetos:</div>
<div style="left:1904px;top:1.5px;width:8px;height:41.5px;background:#e4e4e4"></div>
<div style="left:1905.4px;top:10px;width:7px;height:14.6px;background:#8a8c86"></div>
<div style="left:1910.6px;top:8px;width:2px;height:1px;background:#707070"></div>
<div style="left:1907px;top:26.6px;width:5px;height:1px;background:#707070"></div>
<svg class="abs" style="left:1908px;top:33px" width="4" height="4" viewBox="0 0 4 4"><path d="M0.6 0H4V3Z" fill="#606060"/></svg>
</div>
<div id="canvas"><svg id="cv" width="1817" height="726" viewBox="0 0 1817 726">
<defs><clipPath id="cp"><polygon points="909.0,3.5 932.0,48.0 956.5,95.0 963.0,99.0 1031.5,135.7 1044.4,142.2 1068.4,161.0 1067.8,171.3 1060.6,179.1 1061.3,193.4 1059.3,198.6 1065.8,214.1 1063.9,235.6 1056.1,247.3 1054.2,260.2 1047.7,267.4 1048.3,270.6 1056.1,270.6 1062.6,278.4 1061.9,291.3 1058.0,303.0 1061.3,306.9 1069.1,313.4 1104.8,331.0 1082.5,401.5 1049.9,579.5 1043.9,591.0 987.1,684.2 964.6,711.1 954.9,723.8 919.7,591.0 917.5,581.0 903.3,520.3 897.3,503.8 850.0,394.5 869.5,344.0 870.6,341.1 895.2,307.5 901.0,297.7 888.0,291.9 885.5,286.7 782.5,248.6 714.4,107.0"/></clipPath></defs>
<g clip-path="url(#cp)" stroke="#f00" fill="none" shape-rendering="crispEdges">
<path d="M1133.0 -404.5L693.0 35.5M1133.0 -348.4L693.0 91.6M1133.0 -292.3L693.0 147.7M1133.0 -236.2L693.0 203.8M1133.0 -180.1L693.0 259.9M1133.0 -124.0L693.0 316.0M1133.0 -67.9L693.0 372.1M1133.0 -11.8L693.0 428.2M1133.0 44.3L693.0 484.3M1133.0 100.4L693.0 540.4M1133.0 156.5L693.0 596.5M1133.0 212.6L693.0 652.6M1133.0 268.7L693.0 708.7M1133.0 324.8L693.0 764.8M1133.0 380.9L693.0 820.9M1133.0 437.0L693.0 877.0M1133.0 493.1L693.0 933.1M1133.0 549.2L693.0 989.2M1133.0 605.3L693.0 1045.3M1133.0 661.4L693.0 1101.4" stroke-width="2.0"/>
<path d="M1133.0 -404.5L693.0 35.5M1133.0 -348.4L693.0 91.6M1133.0 -292.3L693.0 147.7M1133.0 -236.2L693.0 203.8M1133.0 -180.1L693.0 259.9M1133.0 -124.0L693.0 316.0M1133.0 -67.9L693.0 372.1M1133.0 -11.8L693.0 428.2M1133.0 44.3L693.0 484.3M1133.0 100.4L693.0 540.4M1133.0 156.5L693.0 596.5M1133.0 212.6L693.0 652.6M1133.0 268.7L693.0 708.7M1133.0 324.8L693.0 764.8M1133.0 380.9L693.0 820.9M1133.0 437.0L693.0 877.0M1133.0 493.1L693.0 933.1M1133.0 549.2L693.0 989.2M1133.0 605.3L693.0 1045.3M1133.0 661.4L693.0 1101.4" stroke-width="3.3" stroke-dasharray="3.3 1.1"/>
<path d="M1133.0 -394.0L693.0 46.0M1133.0 -337.9L693.0 102.1M1133.0 -281.8L693.0 158.2M1133.0 -225.7L693.0 214.3M1133.0 -169.6L693.0 270.4M1133.0 -113.5L693.0 326.5M1133.0 -57.4L693.0 382.6M1133.0 -1.3L693.0 438.7M1133.0 54.8L693.0 494.8M1133.0 110.9L693.0 550.9M1133.0 167.0L693.0 607.0M1133.0 223.1L693.0 663.1M1133.0 279.2L693.0 719.2M1133.0 335.3L693.0 775.3M1133.0 391.4L693.0 831.4M1133.0 447.5L693.0 887.5M1133.0 503.6L693.0 943.6M1133.0 559.7L693.0 999.7M1133.0 615.8L693.0 1055.8M1133.0 671.9L693.0 1111.9" stroke-width="2.0"/>
<path d="M1133.0 -394.0L693.0 46.0M1133.0 -337.9L693.0 102.1M1133.0 -281.8L693.0 158.2M1133.0 -225.7L693.0 214.3M1133.0 -169.6L693.0 270.4M1133.0 -113.5L693.0 326.5M1133.0 -57.4L693.0 382.6M1133.0 -1.3L693.0 438.7M1133.0 54.8L693.0 494.8M1133.0 110.9L693.0 550.9M1133.0 167.0L693.0 607.0M1133.0 223.1L693.0 663.1M1133.0 279.2L693.0 719.2M1133.0 335.3L693.0 775.3M1133.0 391.4L693.0 831.4M1133.0 447.5L693.0 887.5M1133.0 503.6L693.0 943.6M1133.0 559.7L693.0 999.7M1133.0 615.8L693.0 1055.8M1133.0 671.9L693.0 1111.9" stroke-width="3.3" stroke-dasharray="3.3 1.1"/>
<path d="M1133.0 -376.8L693.0 63.2M1133.0 -320.7L693.0 119.3M1133.0 -264.6L693.0 175.4M1133.0 -208.5L693.0 231.5M1133.0 -152.4L693.0 287.6M1133.0 -96.3L693.0 343.7M1133.0 -40.2L693.0 399.8M1133.0 15.9L693.0 455.9M1133.0 72.0L693.0 512.0M1133.0 128.1L693.0 568.1M1133.0 184.2L693.0 624.2M1133.0 240.3L693.0 680.3M1133.0 296.4L693.0 736.4M1133.0 352.5L693.0 792.5M1133.0 408.6L693.0 848.6M1133.0 464.7L693.0 904.7M1133.0 520.8L693.0 960.8M1133.0 576.9L693.0 1016.9M1133.0 633.0L693.0 1073.0M1133.0 689.1L693.0 1129.1" stroke-width="1.3"/>
<path d="M1133.0 -376.8L693.0 63.2M1133.0 -320.7L693.0 119.3M1133.0 -264.6L693.0 175.4M1133.0 -208.5L693.0 231.5M1133.0 -152.4L693.0 287.6M1133.0 -96.3L693.0 343.7M1133.0 -40.2L693.0 399.8M1133.0 15.9L693.0 455.9M1133.0 72.0L693.0 512.0M1133.0 128.1L693.0 568.1M1133.0 184.2L693.0 624.2M1133.0 240.3L693.0 680.3M1133.0 296.4L693.0 736.4M1133.0 352.5L693.0 792.5M1133.0 408.6L693.0 848.6M1133.0 464.7L693.0 904.7M1133.0 520.8L693.0 960.8M1133.0 576.9L693.0 1016.9M1133.0 633.0L693.0 1073.0M1133.0 689.1L693.0 1129.1" stroke-width="2.5" stroke-dasharray="3.3 1.1"/>
<path d="M1132.2 -367.1L692.1 72.9M1133.8 -365.4L693.9 74.6M1132.2 -311.0L692.1 129.0M1133.8 -309.3L693.9 130.7M1132.2 -254.9L692.1 185.1M1133.8 -253.2L693.9 186.8M1132.2 -198.8L692.1 241.2M1133.8 -197.1L693.9 242.9M1132.2 -142.7L692.1 297.3M1133.8 -141.0L693.9 299.0M1132.2 -86.6L692.1 353.4M1133.8 -84.9L693.9 355.1M1132.2 -30.5L692.1 409.5M1133.8 -28.8L693.9 411.2M1132.2 25.6L692.1 465.6M1133.8 27.3L693.9 467.3M1132.2 81.7L692.1 521.7M1133.8 83.4L693.9 523.4M1132.2 137.8L692.1 577.8M1133.8 139.5L693.9 579.5M1132.2 193.9L692.1 633.9M1133.8 195.6L693.9 635.6M1132.2 250.0L692.1 690.0M1133.8 251.7L693.9 691.7M1132.2 306.1L692.1 746.1M1133.8 307.8L693.9 747.8M1132.2 362.2L692.1 802.2M1133.8 363.9L693.9 803.9M1132.2 418.3L692.1 858.3M1133.8 420.0L693.9 860.0M1132.2 474.4L692.1 914.4M1133.8 476.1L693.9 916.1M1132.2 530.5L692.1 970.5M1133.8 532.2L693.9 972.2M1132.2 586.6L692.1 1026.6M1133.8 588.3L693.9 1028.3M1132.2 642.7L692.1 1082.7M1133.8 644.4L693.9 1084.4M1132.2 698.7L692.1 1138.8M1133.8 700.4L693.9 1140.4" stroke-width="1"/>
<path d="M1133.0 -366.3L693.0 73.7M1133.0 -310.2L693.0 129.8M1133.0 -254.1L693.0 185.9M1133.0 -198.0L693.0 242.0M1133.0 -141.9L693.0 298.1M1133.0 -85.8L693.0 354.2M1133.0 -29.7L693.0 410.3M1133.0 26.4L693.0 466.4M1133.0 82.5L693.0 522.5M1133.0 138.6L693.0 578.6M1133.0 194.7L693.0 634.7M1133.0 250.8L693.0 690.8M1133.0 306.9L693.0 746.9M1133.0 363.0L693.0 803.0M1133.0 419.1L693.0 859.1M1133.0 475.2L693.0 915.2M1133.0 531.3L693.0 971.3M1133.0 587.4L693.0 1027.4M1133.0 643.5L693.0 1083.5M1133.0 699.6L693.0 1139.6" stroke-width="2" stroke-dasharray="1.1 3.3"/>
</g>
<polygon points="909.0,3.5 932.0,48.0 956.5,95.0 963.0,99.0 1031.5,135.7 1044.4,142.2 1068.4,161.0 1067.8,171.3 1060.6,179.1 1061.3,193.4 1059.3,198.6 1065.8,214.1 1063.9,235.6 1056.1,247.3 1054.2,260.2 1047.7,267.4 1048.3,270.6 1056.1,270.6 1062.6,278.4 1061.9,291.3 1058.0,303.0 1061.3,306.9 1069.1,313.4 1104.8,331.0 1082.5,401.5 1049.9,579.5 1043.9,591.0 987.1,684.2 964.6,711.1 954.9,723.8 919.7,591.0 917.5,581.0 903.3,520.3 897.3,503.8 850.0,394.5 869.5,344.0 870.6,341.1 895.2,307.5 901.0,297.7 888.0,291.9 885.5,286.7 782.5,248.6 714.4,107.0" fill="none" stroke="#000" stroke-width="2.3" stroke-linejoin="round" shape-rendering="crispEdges" stroke-dasharray="7 1.2"/>
<polygon points="909.0,3.5 932.0,48.0 956.5,95.0 963.0,99.0 1031.5,135.7 1044.4,142.2 1068.4,161.0 1067.8,171.3 1060.6,179.1 1061.3,193.4 1059.3,198.6 1065.8,214.1 1063.9,235.6 1056.1,247.3 1054.2,260.2 1047.7,267.4 1048.3,270.6 1056.1,270.6 1062.6,278.4 1061.9,291.3 1058.0,303.0 1061.3,306.9 1069.1,313.4 1104.8,331.0 1082.5,401.5 1049.9,579.5 1043.9,591.0 987.1,684.2 964.6,711.1 954.9,723.8 919.7,591.0 917.5,581.0 903.3,520.3 897.3,503.8 850.0,394.5 869.5,344.0 870.6,341.1 895.2,307.5 901.0,297.7 888.0,291.9 885.5,286.7 782.5,248.6 714.4,107.0" fill="none" stroke="#000" stroke-width="1.2" stroke-linejoin="round"/>
<polygon points="909.0,3.5 932.0,48.0 956.5,95.0 963.0,99.0 1031.5,135.7 1044.4,142.2 1068.4,161.0 1067.8,171.3 1060.6,179.1 1061.3,193.4 1059.3,198.6 1065.8,214.1 1063.9,235.6 1056.1,247.3 1054.2,260.2 1047.7,267.4 1048.3,270.6 1056.1,270.6 1062.6,278.4 1061.9,291.3 1058.0,303.0 1061.3,306.9 1069.1,313.4 1104.8,331.0 1082.5,401.5 1049.9,579.5 1043.9,591.0 987.1,684.2 964.6,711.1 954.9,723.8 919.7,591.0 917.5,581.0 903.3,520.3 897.3,503.8 850.0,394.5 869.5,344.0 870.6,341.1 895.2,307.5 901.0,297.7 888.0,291.9 885.5,286.7 782.5,248.6 714.4,107.0" fill="none" stroke="#f00" stroke-width="0.9" stroke-linejoin="round" shape-rendering="crispEdges" stroke-dasharray="3 2.5"/>
<polygon points="979.0,300.7 1082.3,402.0 1049.9,579.3 910.0,504.6 930.2,473.9 943.7,453.0 951.9,441.0 967.1,408.3 950.0,324.0" fill="#0f0" stroke="#dfd" stroke-width="1.2" shape-rendering="crispEdges"/>
<polygon points="979.0,300.7 1082.3,402.0 1049.9,579.3 910.0,504.6 930.2,473.9 943.7,453.0 951.9,441.0 967.1,408.3 950.0,324.0" fill="none" stroke="#000" stroke-width="1.3" stroke-dasharray="6 2" shape-rendering="crispEdges"/>
</svg></div>
</div>
</body></html>
